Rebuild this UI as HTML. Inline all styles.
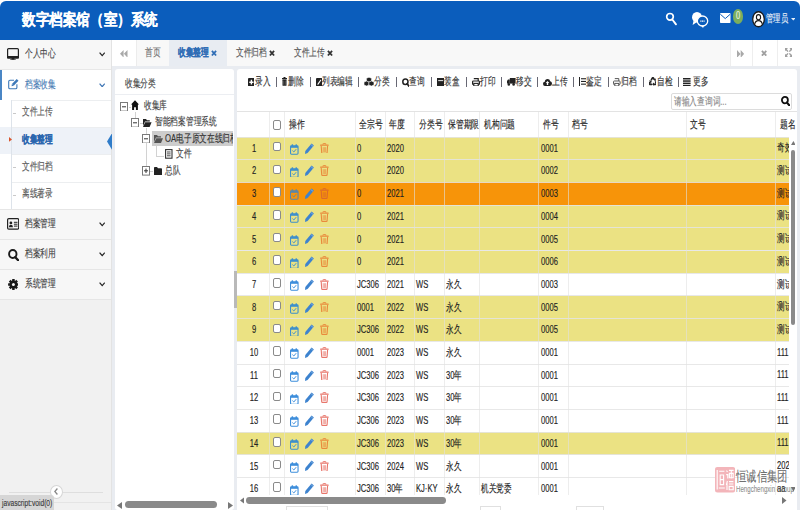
<!DOCTYPE html>
<html><head><meta charset="utf-8"><style>
html,body{margin:0;padding:0;}
body{width:800px;height:510px;overflow:hidden;position:relative;background:#fff;font-family:"Liberation Sans",sans-serif;}
.r{position:absolute;box-sizing:border-box;}
.t{position:absolute;white-space:nowrap;transform-origin:0 50%;-webkit-text-stroke:0.15px currentColor;}
</style></head><body>
<div class="r" style="left:0px;top:0px;width:800px;height:40px;background:#ffffff;"></div>
<div class="r" style="left:0px;top:1px;width:800px;height:39px;background:#0b5dbc;border-radius:6px 6px 0 0"></div>
<div class="t" style="left:22px;top:11.80px;font-size:16px;line-height:16px;color:#ffffff;font-weight:bold;transform:scaleX(0.85);">数字档案馆（室）系统</div>
<svg class="r" style="left:665px;top:12px;" width="13" height="14" viewBox="0 0 13 14" preserveAspectRatio="none"><circle cx="5" cy="4.8" r="3.3" fill="none" stroke="#fff" stroke-width="1.7"/><line x1="7.3" y1="7.5" x2="11" y2="12.3" stroke="#fff" stroke-width="1.9" stroke-linecap="round"/></svg>
<svg class="r" style="left:690px;top:10px;" width="20" height="19" viewBox="0 0 20 19" preserveAspectRatio="none"><ellipse cx="7" cy="7.2" rx="5" ry="5.3" fill="#fff"/><path d="M3.5 11 L2.6 15 L7 12 Z" fill="#fff"/><ellipse cx="12.5" cy="11" rx="5.2" ry="5" fill="#0b5dbc" stroke="#fff" stroke-width="1.3"/><path d="M11 15.5 L13 18 L14.2 15.5 Z" fill="#fff"/><line x1="10.3" y1="11.2" x2="14.7" y2="11.2" stroke="#fff" stroke-width="1.2" stroke-dasharray="1.1 0.5"/></svg>
<svg class="r" style="left:720px;top:13px;" width="10.5" height="10" viewBox="0 0 10.5 10" preserveAspectRatio="none"><rect x="0" y="0" width="10.5" height="10" rx="0.8" fill="#fff"/><path d="M0.3 1.2 L5.25 5.6 L10.2 1.2" fill="none" stroke="#0b5dbc" stroke-width="1"/></svg>
<div class="r" style="left:733px;top:9px;width:10px;height:14.5px;background:#7cae5c;border-radius:5px/7px"></div>
<div class="t" style="left:735.5px;top:10.50px;font-size:10px;line-height:10px;color:#e9f2e4;font-weight:normal;transform:scaleX(0.75);">0</div>
<svg class="r" style="left:751.5px;top:11px;" width="13" height="16.5" viewBox="0 0 13 16.5" preserveAspectRatio="none"><ellipse cx="6.5" cy="8.25" rx="5.8" ry="7.5" fill="#fff" stroke="#1a1a1a" stroke-width="1.3"/><ellipse cx="6.5" cy="6.2" rx="2.1" ry="2.6" fill="none" stroke="#1a1a1a" stroke-width="1.1"/><path d="M2.6 13.6 Q3.2 9.6 6.5 9.6 Q9.8 9.6 10.4 13.6" fill="none" stroke="#1a1a1a" stroke-width="1.1"/></svg>
<div class="t" style="left:766px;top:13.00px;font-size:11px;line-height:11px;color:#e6eef8;font-weight:normal;transform:scaleX(0.66);">管理员</div>
<svg class="r" style="left:790.8px;top:18.2px;" width="4.6" height="2.6" viewBox="0 0 4.6 2.6" preserveAspectRatio="none"><path d="M0 0 L4.6 0 L2.3 2.6 Z" fill="#e6eef8"/></svg>
<div class="r" style="left:0px;top:40px;width:111px;height:470px;background:#f1f1f1;"></div>
<div class="r" style="left:0px;top:40px;width:111px;height:29px;background:#f7f7f7;"></div>
<div class="r" style="left:0px;top:69px;width:111px;height:1px;background:#e8e8e8;"></div>
<div class="r" style="left:0px;top:70px;width:111px;height:139px;background:#ffffff;"></div>
<div class="r" style="left:0px;top:70px;width:2px;height:30px;background:#4a86c5;"></div>
<div class="r" style="left:0px;top:127.2px;width:111px;height:27.2px;background:#eef2f8;"></div>
<div class="r" style="left:11px;top:100px;width:100px;height:1px;background:#eceef0;"></div>
<div class="r" style="left:11px;top:127.2px;width:100px;height:1px;background:#eceef0;"></div>
<div class="r" style="left:11px;top:154.4px;width:100px;height:1px;background:#eceef0;"></div>
<div class="r" style="left:11px;top:181.6px;width:100px;height:1px;background:#eceef0;"></div>
<div class="r" style="left:11px;top:100px;width:1px;height:109px;background:#dde3ea;"></div>
<div class="r" style="left:0px;top:208.8px;width:111px;height:90px;background:#f7f7f7;"></div>
<div class="r" style="left:0px;top:208.8px;width:111px;height:1px;background:#e6e6e6;"></div>
<div class="r" style="left:0px;top:238.8px;width:111px;height:1px;background:#e6e6e6;"></div>
<div class="r" style="left:0px;top:268.8px;width:111px;height:1px;background:#e6e6e6;"></div>
<div class="r" style="left:0px;top:298.8px;width:111px;height:1px;background:#e6e6e6;"></div>
<div class="r" style="left:111px;top:40px;width:1px;height:470px;background:#e3e3e3;"></div>
<svg class="r" style="left:7px;top:47.7px;" width="12" height="12.8" viewBox="0 0 12 12.8" preserveAspectRatio="none"><rect x="0.6" y="0.6" width="10.8" height="9.4" rx="1" fill="none" stroke="#222" stroke-width="1.2"/><rect x="0" y="8" width="12" height="2.4" rx="0.6" fill="#222"/><rect x="4.6" y="10" width="2.8" height="1.6" fill="#222"/><rect x="3.2" y="11.4" width="5.6" height="1.4" fill="#222"/></svg>
<div class="t" style="left:25px;top:48.00px;font-size:11px;line-height:11px;color:#444;font-weight:normal;transform:scaleX(0.7);">个人中心</div>
<svg class="r" style="left:98.8px;top:52.400000000000006px;" width="6.4" height="4.6" viewBox="0 0 6.4 4.6" preserveAspectRatio="none"><path d="M0.6 0.7 L3.2 3.7 L5.8 0.7" fill="none" stroke="#222" stroke-width="1.2"/></svg>
<svg class="r" style="left:7.8px;top:78.2px;" width="11" height="11.4" viewBox="0 0 11 11.4" preserveAspectRatio="none"><path d="M6 2.2 H2 Q0.7 2.2 0.7 3.5 V9.4 Q0.7 10.7 2 10.7 H7.6 Q8.9 10.7 8.9 9.4 V6.2" fill="none" stroke="#3d78b8" stroke-width="1.1"/><path d="M3.6 8.2 L3.9 6 L8.7 1 L10.5 2.7 L5.7 7.8 Z" fill="#3d78b8"/><path d="M4.3 6.4 L5.4 7.5" stroke="#fff" stroke-width="0.5"/></svg>
<div class="t" style="left:25px;top:78.50px;font-size:11px;line-height:11px;color:#4a7db5;font-weight:normal;transform:scaleX(0.7);">档案收集</div>
<svg class="r" style="left:98.8px;top:82.7px;" width="6.4" height="4.6" viewBox="0 0 6.4 4.6" preserveAspectRatio="none"><path d="M0.6 0.7 L3.2 3.7 L5.8 0.7" fill="none" stroke="#3c74b4" stroke-width="1.2"/></svg>
<div class="t" style="left:22px;top:106.40px;font-size:11px;line-height:11px;color:#5a5a5a;font-weight:normal;transform:scaleX(0.7);">文件上传</div>
<div class="r" style="left:12.5px;top:113.0px;width:3.5px;height:1px;background:#c9c9c9;"></div>
<div class="t" style="left:22px;top:133.60px;font-size:11px;line-height:11px;color:#2a66ae;font-weight:bold;transform:scaleX(0.7);">收集整理</div>
<svg class="r" style="left:9.4px;top:137.2px;" width="3" height="4.8" viewBox="0 0 3 4.8" preserveAspectRatio="none"><path d="M0 0 L3 2.4 L0 4.8 Z" fill="#d9542b"/></svg>
<div class="t" style="left:22px;top:160.80px;font-size:11px;line-height:11px;color:#5a5a5a;font-weight:normal;transform:scaleX(0.7);">文件归档</div>
<div class="r" style="left:12.5px;top:167.4px;width:3.5px;height:1px;background:#c9c9c9;"></div>
<div class="t" style="left:22px;top:188.00px;font-size:11px;line-height:11px;color:#5a5a5a;font-weight:normal;transform:scaleX(0.7);">离线著录</div>
<div class="r" style="left:12.5px;top:194.6px;width:3.5px;height:1px;background:#c9c9c9;"></div>
<svg class="r" style="left:106.8px;top:133px;" width="5.2" height="17" viewBox="0 0 5.2 17" preserveAspectRatio="none"><path d="M5.2 0 L0 8.5 L5.2 17 Z" fill="#2f7cc9"/></svg>
<svg class="r" style="left:6.9px;top:218.3px;" width="12.3" height="11.7" viewBox="0 0 12.3 11.7" preserveAspectRatio="none"><rect x="0.6" y="0.6" width="11.1" height="10.5" rx="1.2" fill="none" stroke="#222" stroke-width="1.2"/><circle cx="3.9" cy="4.9" r="1.4" fill="#222"/><path d="M1.8 9.2 Q2 6.7 3.9 6.7 Q5.8 6.7 6 9.2 Z" fill="#222"/><rect x="6.9" y="3.8" width="3.6" height="1" fill="#222"/><rect x="6.9" y="5.7" width="3.6" height="1" fill="#222"/><rect x="6.9" y="7.6" width="3.6" height="1" fill="#222"/></svg>
<div class="t" style="left:25px;top:217.80px;font-size:11px;line-height:11px;color:#444;font-weight:normal;transform:scaleX(0.7);">档案管理</div>
<svg class="r" style="left:98.8px;top:222.2px;" width="6.4" height="4.6" viewBox="0 0 6.4 4.6" preserveAspectRatio="none"><path d="M0.6 0.7 L3.2 3.7 L5.8 0.7" fill="none" stroke="#222" stroke-width="1.2"/></svg>
<svg class="r" style="left:7.6px;top:248.8px;" width="11.4" height="12.4" viewBox="0 0 11.4 12.4" preserveAspectRatio="none"><ellipse cx="4.8" cy="5" rx="3.7" ry="4" fill="none" stroke="#1a1a1a" stroke-width="1.9"/><line x1="7.3" y1="8.2" x2="10.3" y2="11.4" stroke="#1a1a1a" stroke-width="2.3" stroke-linecap="round"/></svg>
<div class="t" style="left:25px;top:247.80px;font-size:11px;line-height:11px;color:#444;font-weight:normal;transform:scaleX(0.7);">档案利用</div>
<svg class="r" style="left:98.8px;top:252.2px;" width="6.4" height="4.6" viewBox="0 0 6.4 4.6" preserveAspectRatio="none"><path d="M0.6 0.7 L3.2 3.7 L5.8 0.7" fill="none" stroke="#222" stroke-width="1.2"/></svg>
<svg class="r" style="left:7.6px;top:279.4px;" width="10.8" height="11" viewBox="0 0 10.8 11" preserveAspectRatio="none"><g transform="translate(5.4 5.5) scale(0.98 1)"><circle r="3.9" fill="#1a1a1a"/><rect x="-1.3" y="-5.4" width="2.6" height="2.6" rx="0.3" fill="#1a1a1a" transform="rotate(0)"/><rect x="-1.3" y="-5.4" width="2.6" height="2.6" rx="0.3" fill="#1a1a1a" transform="rotate(45)"/><rect x="-1.3" y="-5.4" width="2.6" height="2.6" rx="0.3" fill="#1a1a1a" transform="rotate(90)"/><rect x="-1.3" y="-5.4" width="2.6" height="2.6" rx="0.3" fill="#1a1a1a" transform="rotate(135)"/><rect x="-1.3" y="-5.4" width="2.6" height="2.6" rx="0.3" fill="#1a1a1a" transform="rotate(180)"/><rect x="-1.3" y="-5.4" width="2.6" height="2.6" rx="0.3" fill="#1a1a1a" transform="rotate(225)"/><rect x="-1.3" y="-5.4" width="2.6" height="2.6" rx="0.3" fill="#1a1a1a" transform="rotate(270)"/><rect x="-1.3" y="-5.4" width="2.6" height="2.6" rx="0.3" fill="#1a1a1a" transform="rotate(315)"/><circle r="1.5" fill="#f7f7f7"/></g></svg>
<div class="t" style="left:25px;top:277.80px;font-size:11px;line-height:11px;color:#444;font-weight:normal;transform:scaleX(0.7);">系统管理</div>
<svg class="r" style="left:98.8px;top:282.2px;" width="6.4" height="4.6" viewBox="0 0 6.4 4.6" preserveAspectRatio="none"><path d="M0.6 0.7 L3.2 3.7 L5.8 0.7" fill="none" stroke="#222" stroke-width="1.2"/></svg>
<div class="r" style="left:9px;top:491.5px;width:94px;height:1px;background:#dedede;"></div>
<div class="r" style="left:49.5px;top:485px;width:13px;height:14px;border-radius:50%;background:#fff;border:1px solid #d6d6d6"></div>
<svg class="r" style="left:53.5px;top:488px;" width="4" height="7" viewBox="0 0 4 7" preserveAspectRatio="none"><path d="M3.4 0.5 L0.8 3.5 L3.4 6.5" fill="none" stroke="#888" stroke-width="1.3"/></svg>
<div class="r" style="left:0px;top:501.5px;width:111px;height:1px;background:#e4e4e4;"></div>
<div class="r" style="left:0px;top:495px;width:53.6px;height:15px;background:#d6d6d6;border-radius:0 3px 0 0"></div>
<div class="t" style="left:2.2px;top:497.75px;font-size:9.5px;line-height:9.5px;color:#3a3a3a;font-weight:normal;transform:scaleX(0.7);">javascript:void(0)</div>
<div class="r" style="left:112px;top:40px;width:688px;height:25.5px;background:#f8f8f8;"></div>
<div class="r" style="left:112px;top:40px;width:23.5px;height:25.5px;background:#ffffff;"></div>
<div class="r" style="left:135.5px;top:40px;width:1px;height:25.5px;background:#ececec;"></div>
<svg class="r" style="left:120px;top:49.8px;" width="7.5" height="7.6" viewBox="0 0 7.5 7.6" preserveAspectRatio="none"><path d="M3.6 0 L0 3.8 L3.6 7.6 Z M7.5 0 L3.9 3.8 L7.5 7.6 Z" fill="#a9a9a9"/></svg>
<div class="t" style="left:145px;top:47.20px;font-size:11px;line-height:11px;color:#707070;font-weight:normal;transform:scaleX(0.7);">首页</div>
<div class="r" style="left:169.2px;top:40px;width:58.3px;height:25.5px;background:#e8ecf2;"></div>
<div class="t" style="left:178px;top:47.20px;font-size:11px;line-height:11px;color:#2f6db5;font-weight:bold;transform:scaleX(0.7);">收集整理</div>
<svg class="r" style="left:211px;top:50.4px;" width="6" height="6.4" viewBox="0 0 6 6.4" preserveAspectRatio="none"><path d="M0.9 0.9 L5.1 5.5 M5.1 0.9 L0.9 5.5" stroke="#2f6db5" stroke-width="1.8"/></svg>
<div class="t" style="left:236.3px;top:47.20px;font-size:11px;line-height:11px;color:#555;font-weight:normal;transform:scaleX(0.7);">文件归档</div>
<svg class="r" style="left:269.4px;top:50.4px;" width="6" height="6.4" viewBox="0 0 6 6.4" preserveAspectRatio="none"><path d="M0.9 0.9 L5.1 5.5 M5.1 0.9 L0.9 5.5" stroke="#333" stroke-width="1.8"/></svg>
<div class="t" style="left:294px;top:47.20px;font-size:11px;line-height:11px;color:#555;font-weight:normal;transform:scaleX(0.7);">文件上传</div>
<svg class="r" style="left:327.2px;top:50.4px;" width="6" height="6.4" viewBox="0 0 6 6.4" preserveAspectRatio="none"><path d="M0.9 0.9 L5.1 5.5 M5.1 0.9 L0.9 5.5" stroke="#333" stroke-width="1.8"/></svg>
<div class="r" style="left:729.8px;top:40px;width:70.2px;height:25.5px;background:#ffffff;"></div>
<div class="r" style="left:729.8px;top:40px;width:1px;height:25.5px;background:#eeeeee;"></div>
<div class="r" style="left:752px;top:40px;width:1px;height:25.5px;background:#eeeeee;"></div>
<div class="r" style="left:776.5px;top:40px;width:1px;height:25.5px;background:#eeeeee;"></div>
<svg class="r" style="left:737.2px;top:49.6px;" width="7.2" height="7.8" viewBox="0 0 7.2 7.8" preserveAspectRatio="none"><path d="M0 0 L3.5 3.9 L0 7.8 Z M3.7 0 L7.2 3.9 L3.7 7.8 Z" fill="#a9a9a9"/></svg>
<svg class="r" style="left:761.4px;top:49.7px;" width="6.2" height="6.6" viewBox="0 0 6.2 6.6" preserveAspectRatio="none"><path d="M0.9 0.9 L5.3 5.699999999999999 M5.3 0.9 L0.9 5.699999999999999" stroke="#a0a0a0" stroke-width="1.8"/></svg>
<svg class="r" style="left:785px;top:48.2px;" width="7.4" height="9" viewBox="0 0 7.4 9" preserveAspectRatio="none"><path d="M1 1.2 L3 3.6 M6.4 1.2 L4.4 3.6 M1 7.8 L3 5.4 M6.4 7.8 L4.4 5.4" stroke="#a0a0a0" stroke-width="1.4"/><path d="M0 0 H3 L0 3.3 Z M7.4 0 H4.4 L7.4 3.3 Z M0 9 H3 L0 5.7 Z M7.4 9 H4.4 L7.4 5.7 Z" fill="#a0a0a0"/></svg>
<div class="r" style="left:112px;top:65.5px;width:688px;height:444.5px;background:#e9ecf1;"></div>
<div class="r" style="left:115px;top:68.7px;width:118.5px;height:441.3px;background:#ffffff;border-radius:3px"></div>
<div class="r" style="left:115px;top:93.5px;width:118.5px;height:1.2px;background:#eceef2;"></div>
<div class="t" style="left:125px;top:78.00px;font-size:11px;line-height:11px;color:#444;font-weight:normal;transform:scaleX(0.7);">收集分类</div>
<div class="r" style="left:135px;top:111.5px;width:1px;height:6.0px;background:#d2d2d2;"></div>
<div class="r" style="left:145.8px;top:127.5px;width:1px;height:43.5px;background:#d2d2d2;"></div>
<div class="r" style="left:156px;top:143px;width:1px;height:13px;background:#d2d2d2;"></div>
<div class="r" style="left:156px;top:155.5px;width:8px;height:1px;background:#d2d2d2;"></div>
<div class="r" style="left:128.5px;top:106.5px;width:2.5px;height:1px;background:#d2d2d2;"></div>
<div class="r" style="left:139.5px;top:122.5px;width:3.5px;height:1px;background:#d2d2d2;"></div>
<div class="r" style="left:150px;top:170.5px;width:3px;height:1px;background:#d2d2d2;"></div>
<svg class="r" style="left:120.2px;top:101.6px;" width="8" height="9.6" viewBox="0 0 8 9.6" preserveAspectRatio="none"><rect x="0.5" y="0.5" width="7" height="8.6" fill="#fff" stroke="#7a7a7a" stroke-width="1"/><line x1="2" y1="4.8" x2="6" y2="4.8" stroke="#333" stroke-width="1"/></svg>
<svg class="r" style="left:131.3px;top:100.2px;" width="8" height="10.3" viewBox="0 0 8 10.3" preserveAspectRatio="none"><path d="M4 0.3 L8 4.6 L6.9 4.6 L6.9 10.3 L4.9 10.3 L4.9 7.2 L3.1 7.2 L3.1 10.3 L1.1 10.3 L1.1 4.6 L0 4.6 Z" fill="#111"/></svg>
<div class="t" style="left:144.2px;top:99.60px;font-size:11px;line-height:11px;color:#444;font-weight:normal;transform:scaleX(0.7);">收集库</div>
<svg class="r" style="left:131.4px;top:117.8px;" width="8" height="9.6" viewBox="0 0 8 9.6" preserveAspectRatio="none"><rect x="0.5" y="0.5" width="7" height="8.6" fill="#fff" stroke="#7a7a7a" stroke-width="1"/><line x1="2" y1="4.8" x2="6" y2="4.8" stroke="#333" stroke-width="1"/></svg>
<svg class="r" style="left:143.3px;top:118px;" width="8.6" height="9" viewBox="0 0 8.6 9" preserveAspectRatio="none"><path d="M0 1 H3 L4 2.2 H6.8 V3.6 H2 L0 8 Z" fill="#222"/><path d="M2.2 4.2 H8.6 L6.6 9 H0 Z" fill="#222"/></svg>
<div class="t" style="left:155.2px;top:116.20px;font-size:11px;line-height:11px;color:#444;font-weight:normal;transform:scaleX(0.7);">智能档案管理系统</div>
<div class="r" style="left:151.7px;top:131px;width:81.8px;height:15px;background:#cdcdcd;"></div>
<svg class="r" style="left:142px;top:133.8px;" width="8" height="9.6" viewBox="0 0 8 9.6" preserveAspectRatio="none"><rect x="0.5" y="0.5" width="7" height="8.6" fill="#fff" stroke="#7a7a7a" stroke-width="1"/><line x1="2" y1="4.8" x2="6" y2="4.8" stroke="#333" stroke-width="1"/></svg>
<svg class="r" style="left:154.3px;top:134.3px;" width="9" height="9" viewBox="0 0 9 9" preserveAspectRatio="none"><path d="M0 1 H3 L4 2.2 H7 V3.6 H2 L0 8 Z" fill="#555"/><path d="M2.3 4.2 H9 L7 9 H0 Z" fill="#555"/></svg>
<div class="r" style="left:151.7px;top:131px;width:81.8px;height:15px;overflow:hidden">
<div class="t" style="left:13.5px;top:1.5px;font-size:11px;line-height:11px;color:#333;transform:scaleX(0.70)">OA电子原文在线归档</div>
</div>
<svg class="r" style="left:165.2px;top:149px;" width="7.6" height="9.8" viewBox="0 0 7.6 9.8" preserveAspectRatio="none"><rect x="0.6" y="0.6" width="6.4" height="8.6" fill="none" stroke="#333" stroke-width="1.1"/><line x1="2" y1="3" x2="5.6" y2="3" stroke="#333" stroke-width="0.9"/><line x1="2" y1="4.9" x2="5.6" y2="4.9" stroke="#333" stroke-width="0.9"/><line x1="2" y1="6.8" x2="5.6" y2="6.8" stroke="#333" stroke-width="0.9"/></svg>
<div class="t" style="left:176.2px;top:148.00px;font-size:11px;line-height:11px;color:#444;font-weight:normal;transform:scaleX(0.7);">文件</div>
<svg class="r" style="left:141.8px;top:166.2px;" width="8" height="9.6" viewBox="0 0 8 9.6" preserveAspectRatio="none"><rect x="0.5" y="0.5" width="7" height="8.6" fill="#fff" stroke="#7a7a7a" stroke-width="1"/><line x1="2" y1="4.8" x2="6" y2="4.8" stroke="#333" stroke-width="1"/><line x1="4" y1="2.6" x2="4" y2="7" stroke="#333" stroke-width="1"/></svg>
<svg class="r" style="left:154.3px;top:166.8px;" width="8" height="8.4" viewBox="0 0 8 8.4" preserveAspectRatio="none"><path d="M0 0.8 Q0 0 0.8 0 H3 L4 1.3 H7.2 Q8 1.3 8 2.1 V7.6 Q8 8.4 7.2 8.4 H0.8 Q0 8.4 0 7.6 Z" fill="#222"/></svg>
<div class="t" style="left:165.2px;top:164.50px;font-size:11px;line-height:11px;color:#444;font-weight:normal;transform:scaleX(0.7);">总队</div>
<svg class="r" style="left:116.5px;top:501.5px;" width="5" height="7" viewBox="0 0 5 7" preserveAspectRatio="none"><path d="M5 0 L0 3.5 L5 7 Z" fill="#777"/></svg>
<div class="r" style="left:125px;top:501px;width:92px;height:7px;background:#8a8a8a;border-radius:3.5px"></div>
<svg class="r" style="left:228px;top:501.5px;" width="5" height="7" viewBox="0 0 5 7" preserveAspectRatio="none"><path d="M0 0 L5 3.5 L0 7 Z" fill="#777"/></svg>
<div class="r" style="left:233.5px;top:270.6px;width:3.5px;height:37.4px;background:#b9b9b9;"></div>
<div class="r" style="left:237px;top:69px;width:560px;height:441px;background:#ffffff;border-radius:3px"></div>
<svg class="r" style="left:247.6px;top:77.6px;" width="6.8" height="8.4" viewBox="0 0 6.8 8.4" preserveAspectRatio="none"><rect x="0" y="0" width="6.8" height="8.4" rx="1" fill="#222"/><path d="M3.4 1.8 V6.6 M1.3 4.2 H5.5" stroke="#fff" stroke-width="1.4"/></svg>
<div class="t" style="left:255px;top:75.80px;font-size:11px;line-height:11px;color:#333;font-weight:normal;transform:scaleX(0.7);">录入</div>
<div class="r" style="left:275.9px;top:77.4px;width:1.1px;height:9.4px;background:#686874;"></div>
<svg class="r" style="left:282px;top:77.4px;" width="5" height="8.8" viewBox="0 0 5 8.8" preserveAspectRatio="none"><rect x="1.5" y="0" width="2" height="1.2" fill="#222"/><rect x="0" y="1" width="5" height="1.3" fill="#222"/><rect x="0.5" y="2.6" width="4" height="6.2" rx="0.6" fill="#222"/><path d="M1.7 3.6 V7.8 M3.3 3.6 V7.8" stroke="#888" stroke-width="0.5"/></svg>
<div class="t" style="left:287.6px;top:75.80px;font-size:11px;line-height:11px;color:#333;font-weight:normal;transform:scaleX(0.7);">删除</div>
<div class="r" style="left:309.9px;top:77.4px;width:1.1px;height:9.4px;background:#686874;"></div>
<svg class="r" style="left:316px;top:77.6px;" width="6.4" height="8.4" viewBox="0 0 6.4 8.4" preserveAspectRatio="none"><rect x="0" y="0" width="6.4" height="8.4" rx="1" fill="#222"/><path d="M1.4 7 L1.7 5.6 L4.6 1.6 L5.3 2.3 L2.5 6.4 Z" fill="#fff"/></svg>
<div class="t" style="left:322.3px;top:75.80px;font-size:11px;line-height:11px;color:#333;font-weight:normal;transform:scaleX(0.7);">列表编辑</div>
<div class="r" style="left:357.9px;top:77.4px;width:1.1px;height:9.4px;background:#686874;"></div>
<svg class="r" style="left:364px;top:77.2px;" width="10" height="9.4" viewBox="0 0 10 9.4" preserveAspectRatio="none"><g fill="#222" stroke="#fff" stroke-width="0.6"><path d="M5 0.2 L7.6 1.3 V4.2 L5 5.3 L2.4 4.2 V1.3 Z"/><path d="M2.6 4 L5.2 5.1 V8 L2.6 9.1 L0 8 V5.1 Z"/><path d="M7.4 4 L10 5.1 V8 L7.4 9.1 L4.8 8 V5.1 Z"/></g></svg>
<div class="t" style="left:374.2px;top:75.80px;font-size:11px;line-height:11px;color:#333;font-weight:normal;transform:scaleX(0.7);">分类</div>
<div class="r" style="left:395.7px;top:77.4px;width:1.1px;height:9.4px;background:#686874;"></div>
<svg class="r" style="left:401.6px;top:77.6px;" width="7.8" height="9" viewBox="0 0 7.8 9" preserveAspectRatio="none"><ellipse cx="3.4" cy="3.7" rx="2.6" ry="2.8" fill="none" stroke="#222" stroke-width="1.5"/><line x1="5.2" y1="5.8" x2="7.2" y2="8.4" stroke="#222" stroke-width="1.8" stroke-linecap="round"/></svg>
<div class="t" style="left:409px;top:75.80px;font-size:11px;line-height:11px;color:#333;font-weight:normal;transform:scaleX(0.7);">查询</div>
<div class="r" style="left:431.1px;top:77.4px;width:1.1px;height:9.4px;background:#686874;"></div>
<svg class="r" style="left:437px;top:77.6px;" width="7.4" height="8.4" viewBox="0 0 7.4 8.4" preserveAspectRatio="none"><rect x="0" y="0" width="7.4" height="8.4" fill="#222"/><rect x="1.2" y="2.2" width="5" height="0.9" fill="#fff"/></svg>
<div class="t" style="left:444.4px;top:75.80px;font-size:11px;line-height:11px;color:#333;font-weight:normal;transform:scaleX(0.7);">装盒</div>
<div class="r" style="left:465.9px;top:77.4px;width:1.1px;height:9.4px;background:#686874;"></div>
<svg class="r" style="left:472px;top:77.6px;" width="8" height="8.6" viewBox="0 0 8 8.6" preserveAspectRatio="none"><path d="M1.8 0.6 H6.2 V3" fill="none" stroke="#222" stroke-width="1.2"/><rect x="0.6" y="3" width="6.8" height="3.6" rx="0.8" fill="none" stroke="#222" stroke-width="1.2"/><rect x="1.8" y="5.4" width="4.4" height="2.6" fill="#fff" stroke="#222" stroke-width="1.1"/></svg>
<div class="t" style="left:480px;top:75.80px;font-size:11px;line-height:11px;color:#333;font-weight:normal;transform:scaleX(0.7);">打印</div>
<div class="r" style="left:500.9px;top:77.4px;width:1.1px;height:9.4px;background:#686874;"></div>
<svg class="r" style="left:507px;top:78.2px;" width="8.6" height="7.8" viewBox="0 0 8.6 7.8" preserveAspectRatio="none"><rect x="2.8" y="0" width="5.8" height="5.6" fill="#222"/><path d="M0 3 L1 1.6 H2.8 V5.6 H0 Z" fill="#222"/><circle cx="1.8" cy="6.4" r="1.3" fill="#222"/><circle cx="6.6" cy="6.4" r="1.3" fill="#222"/></svg>
<div class="t" style="left:515.6px;top:75.80px;font-size:11px;line-height:11px;color:#333;font-weight:normal;transform:scaleX(0.7);">移交</div>
<div class="r" style="left:536.7px;top:77.4px;width:1.1px;height:9.4px;background:#686874;"></div>
<svg class="r" style="left:543px;top:77.6px;" width="9" height="8" viewBox="0 0 9 8" preserveAspectRatio="none"><path d="M2 8 Q0 8 0 5.8 Q0 4 1.8 3.8 Q2 1 4.6 1 Q6.8 1 7.2 3.2 Q9 3.4 9 5.6 Q9 8 7 8 Z" fill="#222"/><path d="M4.5 3 L6.3 5 H5.2 V7 H3.8 V5 H2.7 Z" fill="#fff"/></svg>
<div class="t" style="left:552px;top:75.80px;font-size:11px;line-height:11px;color:#333;font-weight:normal;transform:scaleX(0.7);">上传</div>
<div class="r" style="left:572.5px;top:77.4px;width:1.1px;height:9.4px;background:#686874;"></div>
<svg class="r" style="left:578.6px;top:77.4px;" width="7.4" height="9" viewBox="0 0 7.4 9" preserveAspectRatio="none"><rect x="0" y="0" width="1" height="9" fill="#222"/><rect x="2" y="1.2" width="5.4" height="1.1" fill="#222"/><rect x="2" y="3.9" width="5.4" height="1.1" fill="#222"/><rect x="2" y="6.6" width="5.4" height="1.1" fill="#222"/></svg>
<div class="t" style="left:586px;top:75.80px;font-size:11px;line-height:11px;color:#333;font-weight:normal;transform:scaleX(0.7);">鉴定</div>
<div class="r" style="left:608.1px;top:77.4px;width:1.1px;height:9.4px;background:#686874;"></div>
<svg class="r" style="left:613.4px;top:77.6px;" width="7.6" height="8.6" viewBox="0 0 7.6 8.6" preserveAspectRatio="none"><path d="M1.8 0.6 H5.8 V3" fill="none" stroke="#555" stroke-width="1"/><rect x="0.5" y="3" width="6.6" height="3.6" rx="0.8" fill="none" stroke="#555" stroke-width="1"/><rect x="1.8" y="5.4" width="4" height="2.6" fill="#fff" stroke="#555" stroke-width="1"/></svg>
<div class="t" style="left:621px;top:75.80px;font-size:11px;line-height:11px;color:#333;font-weight:normal;transform:scaleX(0.7);">归档</div>
<div class="r" style="left:642.5px;top:77.4px;width:1.1px;height:9.4px;background:#686874;"></div>
<svg class="r" style="left:648.6px;top:77.4px;" width="7.8" height="8.8" viewBox="0 0 7.8 8.8" preserveAspectRatio="none"><g fill="none" stroke="#222" stroke-width="1.7" stroke-linecap="butt"><path d="M2.2 3.2 L3.3 1.2 Q3.9 0.3 4.5 1.2 L5.3 2.6"/><path d="M6.4 4.4 L7.2 6 Q7.7 7.3 6.4 7.3 H4.8"/><path d="M3 7.3 H1.4 Q0.1 7.3 0.6 6 L1.2 4.8"/></g><path d="M4.4 2.4 L6.9 1.6 L6.6 4.4 Z M5 5.6 L3 7.3 L5 8.8 Z M0 3.6 L2.9 3.4 L2.1 6 Z" fill="#222"/></svg>
<div class="t" style="left:656.6px;top:75.80px;font-size:11px;line-height:11px;color:#333;font-weight:normal;transform:scaleX(0.7);">自检</div>
<div class="r" style="left:678.1px;top:77.4px;width:1.1px;height:9.4px;background:#686874;"></div>
<svg class="r" style="left:683px;top:77.8px;" width="7.6" height="8.4" viewBox="0 0 7.6 8.4" preserveAspectRatio="none"><rect x="0" y="0" width="7.6" height="1.5" fill="#222"/><rect x="0" y="2.3" width="7.6" height="1.5" fill="#222"/><rect x="0" y="4.6" width="7.6" height="1.5" fill="#222"/><rect x="0" y="6.9" width="7.6" height="1.5" fill="#222"/></svg>
<div class="t" style="left:693.4px;top:75.80px;font-size:11px;line-height:11px;color:#333;font-weight:normal;transform:scaleX(0.7);">更多</div>
<div class="r" style="left:670.5px;top:92.8px;width:121px;height:17.5px;background:#fff;border:1px solid #dcdcdc;border-radius:2px"></div>
<div class="t" style="left:673.7px;top:95.60px;font-size:11px;line-height:11px;color:#888;font-weight:normal;transform:scaleX(0.7);">请输入查询词...</div>
<svg class="r" style="left:780.5px;top:96.3px;" width="9.2" height="10.2" viewBox="0 0 9.2 10.2" preserveAspectRatio="none"><ellipse cx="3.9" cy="4.1" rx="3" ry="3.2" fill="none" stroke="#111" stroke-width="1.8"/><line x1="6" y1="6.6" x2="8.4" y2="9.4" stroke="#111" stroke-width="2.2" stroke-linecap="round"/></svg>
<div class="r" style="left:237px;top:111px;width:560px;height:384px;overflow:hidden">
<div class="r" style="left:0.00px;top:0.00px;width:560.00px;height:1.00px;background:#e3e3e3;"></div>
<div class="r" style="left:48.00px;top:0px;width:70.30px;height:26px;overflow:hidden">
<div class="t" style="left:3.60px;top:7.5px;font-size:11px;line-height:11px;color:#222;font-weight:500;transform:scaleX(0.71)">操作</div>
</div>
<div class="r" style="left:118.80px;top:0px;width:29.40px;height:26px;overflow:hidden">
<div class="t" style="left:3.60px;top:7.5px;font-size:11px;line-height:11px;color:#222;font-weight:500;transform:scaleX(0.71)">全宗号</div>
</div>
<div class="r" style="left:148.70px;top:0px;width:29.00px;height:26px;overflow:hidden">
<div class="t" style="left:3.60px;top:7.5px;font-size:11px;line-height:11px;color:#222;font-weight:500;transform:scaleX(0.71)">年度</div>
</div>
<div class="r" style="left:178.20px;top:0px;width:29.20px;height:26px;overflow:hidden">
<div class="t" style="left:3.60px;top:7.5px;font-size:11px;line-height:11px;color:#222;font-weight:500;transform:scaleX(0.71)">分类号</div>
</div>
<div class="r" style="left:207.90px;top:0px;width:34.60px;height:26px;overflow:hidden">
<div class="t" style="left:3.60px;top:7.5px;font-size:11px;line-height:11px;color:#222;font-weight:500;transform:scaleX(0.71)">保管期限</div>
</div>
<div class="r" style="left:243.00px;top:0px;width:58.75px;height:26px;overflow:hidden">
<div class="t" style="left:3.60px;top:7.5px;font-size:11px;line-height:11px;color:#222;font-weight:500;transform:scaleX(0.71)">机构问题</div>
</div>
<div class="r" style="left:302.25px;top:0px;width:28.75px;height:26px;overflow:hidden">
<div class="t" style="left:3.60px;top:7.5px;font-size:11px;line-height:11px;color:#222;font-weight:500;transform:scaleX(0.71)">件号</div>
</div>
<div class="r" style="left:331.50px;top:0px;width:117.75px;height:26px;overflow:hidden">
<div class="t" style="left:3.60px;top:7.5px;font-size:11px;line-height:11px;color:#222;font-weight:500;transform:scaleX(0.71)">档号</div>
</div>
<div class="r" style="left:449.75px;top:0px;width:88.75px;height:26px;overflow:hidden">
<div class="t" style="left:3.60px;top:7.5px;font-size:11px;line-height:11px;color:#222;font-weight:500;transform:scaleX(0.71)">文号</div>
</div>
<div class="r" style="left:539.00px;top:0px;width:21.00px;height:26px;overflow:hidden">
<div class="t" style="left:3.60px;top:7.5px;font-size:11px;line-height:11px;color:#222;font-weight:500;transform:scaleX(0.71)">题名</div>
</div>
<div class="r" style="left:36.10px;top:9.30px;width:7.80px;height:9.60px;background:#fff;border:1px solid #8a8a8a;border-radius:2px"></div>
<div class="r" style="left:0.00px;top:26.00px;width:552.00px;height:22.70px;background:#ebe283;"></div>
<div class="t" style="left:16.50px;top:31.75px;font-size:11px;line-height:11px;color:#222;font-weight:normal;transform:scaleX(0.69);transform-origin:50% 50%;width:0;display:flex;justify-content:center">1</div>
<div class="r" style="left:36.40px;top:30.90px;width:7.80px;height:9.60px;background:#fff;border:1px solid #8a8a8a;border-radius:2px"></div>
<svg class="r" style="left:53.40px;top:33.00px" width="8.6" height="10.8" viewBox="0 0 8.6 10.8" preserveAspectRatio="none"><rect x="0.55" y="1.9" width="7.5" height="8.35" rx="0.9" fill="none" stroke="#3d8fcc" stroke-width="1.1"/><rect x="0.55" y="1.9" width="7.5" height="1.9" fill="#3d8fcc"/><rect x="1.6" y="0.2" width="1.5" height="2.8" rx="0.5" fill="#3d8fcc"/><rect x="5.5" y="0.2" width="1.5" height="2.8" rx="0.5" fill="#3d8fcc"/><path d="M2.4 6.6 L3.8 8 L6.2 5.2" fill="none" stroke="#3d8fcc" stroke-width="1"/></svg>
<svg class="r" style="left:67.80px;top:31.60px" width="9" height="11" viewBox="0 0 9 11" preserveAspectRatio="none"><path d="M0 11 L0.3 8.1 L6.6 0.5 L8.9 2.4 L2.6 10 Z" fill="#3d83cf"/><path d="M5.8 1.5 L8.1 3.4" stroke="#a9c9ea" stroke-width="0.6"/></svg>
<svg class="r" style="left:83.00px;top:31.70px" width="8.8" height="10.8" viewBox="0 0 8.8 10.8" preserveAspectRatio="none"><path d="M3 1.6 V0.9 Q3 0.4 3.5 0.4 H5.3 Q5.8 0.4 5.8 0.9 V1.6" fill="none" stroke="#e98a3c" stroke-width="1"/><rect x="0.1" y="1.5" width="8.6" height="1.3" rx="0.4" fill="#e98a3c"/><path d="M1.2 2.8 L1.7 9.8 Q1.8 10.4 2.4 10.4 H6.4 Q7 10.4 7.1 9.8 L7.6 2.8" fill="none" stroke="#e98a3c" stroke-width="1.1"/><path d="M3.2 4.2 V9 M4.4 4.2 V9 M5.6 4.2 V9" stroke="#e98a3c" stroke-width="0.65"/></svg>
<div class="t" style="left:120.00px;top:31.75px;font-size:11px;line-height:11px;color:#222;font-weight:normal;transform:scaleX(0.69);">0</div>
<div class="t" style="left:149.90px;top:31.75px;font-size:11px;line-height:11px;color:#222;font-weight:normal;transform:scaleX(0.69);">2020</div>
<div class="t" style="left:303.50px;top:31.75px;font-size:11px;line-height:11px;color:#222;font-weight:normal;transform:scaleX(0.69);">0001</div>
<div class="r" style="left:539.00px;top:26.00px;width:13.00px;height:22.7px;overflow:hidden">
<div class="t" style="left:1.4px;top:5.35px;font-size:11px;line-height:11px;color:#222;transform:scaleX(0.69)">奇效</div>
</div>
<div class="r" style="left:0.00px;top:48.70px;width:552.00px;height:22.70px;background:#ebe283;"></div>
<div class="t" style="left:16.50px;top:54.45px;font-size:11px;line-height:11px;color:#222;font-weight:normal;transform:scaleX(0.69);transform-origin:50% 50%;width:0;display:flex;justify-content:center">2</div>
<div class="r" style="left:36.40px;top:53.60px;width:7.80px;height:9.60px;background:#fff;border:1px solid #8a8a8a;border-radius:2px"></div>
<svg class="r" style="left:53.40px;top:55.70px" width="8.6" height="10.8" viewBox="0 0 8.6 10.8" preserveAspectRatio="none"><rect x="0.55" y="1.9" width="7.5" height="8.35" rx="0.9" fill="none" stroke="#3d8fcc" stroke-width="1.1"/><rect x="0.55" y="1.9" width="7.5" height="1.9" fill="#3d8fcc"/><rect x="1.6" y="0.2" width="1.5" height="2.8" rx="0.5" fill="#3d8fcc"/><rect x="5.5" y="0.2" width="1.5" height="2.8" rx="0.5" fill="#3d8fcc"/><path d="M2.4 6.6 L3.8 8 L6.2 5.2" fill="none" stroke="#3d8fcc" stroke-width="1"/></svg>
<svg class="r" style="left:67.80px;top:54.30px" width="9" height="11" viewBox="0 0 9 11" preserveAspectRatio="none"><path d="M0 11 L0.3 8.1 L6.6 0.5 L8.9 2.4 L2.6 10 Z" fill="#3d83cf"/><path d="M5.8 1.5 L8.1 3.4" stroke="#a9c9ea" stroke-width="0.6"/></svg>
<svg class="r" style="left:83.00px;top:54.40px" width="8.8" height="10.8" viewBox="0 0 8.8 10.8" preserveAspectRatio="none"><path d="M3 1.6 V0.9 Q3 0.4 3.5 0.4 H5.3 Q5.8 0.4 5.8 0.9 V1.6" fill="none" stroke="#e98a3c" stroke-width="1"/><rect x="0.1" y="1.5" width="8.6" height="1.3" rx="0.4" fill="#e98a3c"/><path d="M1.2 2.8 L1.7 9.8 Q1.8 10.4 2.4 10.4 H6.4 Q7 10.4 7.1 9.8 L7.6 2.8" fill="none" stroke="#e98a3c" stroke-width="1.1"/><path d="M3.2 4.2 V9 M4.4 4.2 V9 M5.6 4.2 V9" stroke="#e98a3c" stroke-width="0.65"/></svg>
<div class="t" style="left:120.00px;top:54.45px;font-size:11px;line-height:11px;color:#222;font-weight:normal;transform:scaleX(0.69);">0</div>
<div class="t" style="left:149.90px;top:54.45px;font-size:11px;line-height:11px;color:#222;font-weight:normal;transform:scaleX(0.69);">2020</div>
<div class="t" style="left:303.50px;top:54.45px;font-size:11px;line-height:11px;color:#222;font-weight:normal;transform:scaleX(0.69);">0002</div>
<div class="r" style="left:539.00px;top:48.70px;width:13.00px;height:22.7px;overflow:hidden">
<div class="t" style="left:1.4px;top:5.35px;font-size:11px;line-height:11px;color:#222;transform:scaleX(0.69)">测试</div>
</div>
<div class="r" style="left:0.00px;top:71.40px;width:552.00px;height:22.70px;background:#f79409;"></div>
<div class="t" style="left:16.50px;top:77.15px;font-size:11px;line-height:11px;color:#222;font-weight:normal;transform:scaleX(0.69);transform-origin:50% 50%;width:0;display:flex;justify-content:center">3</div>
<div class="r" style="left:36.40px;top:76.30px;width:7.80px;height:9.60px;background:#fff;border:1px solid #8a8a8a;border-radius:2px"></div>
<svg class="r" style="left:53.40px;top:78.40px" width="8.6" height="10.8" viewBox="0 0 8.6 10.8" preserveAspectRatio="none"><rect x="0.55" y="1.9" width="7.5" height="8.35" rx="0.9" fill="none" stroke="#5a86a8" stroke-width="1.1"/><rect x="0.55" y="1.9" width="7.5" height="1.9" fill="#5a86a8"/><rect x="1.6" y="0.2" width="1.5" height="2.8" rx="0.5" fill="#5a86a8"/><rect x="5.5" y="0.2" width="1.5" height="2.8" rx="0.5" fill="#5a86a8"/><path d="M2.4 6.6 L3.8 8 L6.2 5.2" fill="none" stroke="#5a86a8" stroke-width="1"/></svg>
<svg class="r" style="left:67.80px;top:77.00px" width="9" height="11" viewBox="0 0 9 11" preserveAspectRatio="none"><path d="M0 11 L0.3 8.1 L6.6 0.5 L8.9 2.4 L2.6 10 Z" fill="#3d83cf"/><path d="M5.8 1.5 L8.1 3.4" stroke="#a9c9ea" stroke-width="0.6"/></svg>
<svg class="r" style="left:83.00px;top:77.10px" width="8.8" height="10.8" viewBox="0 0 8.8 10.8" preserveAspectRatio="none"><path d="M3 1.6 V0.9 Q3 0.4 3.5 0.4 H5.3 Q5.8 0.4 5.8 0.9 V1.6" fill="none" stroke="#dc6a2a" stroke-width="1"/><rect x="0.1" y="1.5" width="8.6" height="1.3" rx="0.4" fill="#dc6a2a"/><path d="M1.2 2.8 L1.7 9.8 Q1.8 10.4 2.4 10.4 H6.4 Q7 10.4 7.1 9.8 L7.6 2.8" fill="none" stroke="#dc6a2a" stroke-width="1.1"/><path d="M3.2 4.2 V9 M4.4 4.2 V9 M5.6 4.2 V9" stroke="#dc6a2a" stroke-width="0.65"/></svg>
<div class="t" style="left:120.00px;top:77.15px;font-size:11px;line-height:11px;color:#222;font-weight:normal;transform:scaleX(0.69);">0</div>
<div class="t" style="left:149.90px;top:77.15px;font-size:11px;line-height:11px;color:#222;font-weight:normal;transform:scaleX(0.69);">2021</div>
<div class="t" style="left:303.50px;top:77.15px;font-size:11px;line-height:11px;color:#222;font-weight:normal;transform:scaleX(0.69);">0003</div>
<div class="r" style="left:539.00px;top:71.40px;width:13.00px;height:22.7px;overflow:hidden">
<div class="t" style="left:1.4px;top:5.35px;font-size:11px;line-height:11px;color:#222;transform:scaleX(0.69)">测试</div>
</div>
<div class="r" style="left:0.00px;top:94.10px;width:552.00px;height:22.70px;background:#ebe283;"></div>
<div class="t" style="left:16.50px;top:99.85px;font-size:11px;line-height:11px;color:#222;font-weight:normal;transform:scaleX(0.69);transform-origin:50% 50%;width:0;display:flex;justify-content:center">4</div>
<div class="r" style="left:36.40px;top:99.00px;width:7.80px;height:9.60px;background:#fff;border:1px solid #8a8a8a;border-radius:2px"></div>
<svg class="r" style="left:53.40px;top:101.10px" width="8.6" height="10.8" viewBox="0 0 8.6 10.8" preserveAspectRatio="none"><rect x="0.55" y="1.9" width="7.5" height="8.35" rx="0.9" fill="none" stroke="#3d8fcc" stroke-width="1.1"/><rect x="0.55" y="1.9" width="7.5" height="1.9" fill="#3d8fcc"/><rect x="1.6" y="0.2" width="1.5" height="2.8" rx="0.5" fill="#3d8fcc"/><rect x="5.5" y="0.2" width="1.5" height="2.8" rx="0.5" fill="#3d8fcc"/><path d="M2.4 6.6 L3.8 8 L6.2 5.2" fill="none" stroke="#3d8fcc" stroke-width="1"/></svg>
<svg class="r" style="left:67.80px;top:99.70px" width="9" height="11" viewBox="0 0 9 11" preserveAspectRatio="none"><path d="M0 11 L0.3 8.1 L6.6 0.5 L8.9 2.4 L2.6 10 Z" fill="#3d83cf"/><path d="M5.8 1.5 L8.1 3.4" stroke="#a9c9ea" stroke-width="0.6"/></svg>
<svg class="r" style="left:83.00px;top:99.80px" width="8.8" height="10.8" viewBox="0 0 8.8 10.8" preserveAspectRatio="none"><path d="M3 1.6 V0.9 Q3 0.4 3.5 0.4 H5.3 Q5.8 0.4 5.8 0.9 V1.6" fill="none" stroke="#e98a3c" stroke-width="1"/><rect x="0.1" y="1.5" width="8.6" height="1.3" rx="0.4" fill="#e98a3c"/><path d="M1.2 2.8 L1.7 9.8 Q1.8 10.4 2.4 10.4 H6.4 Q7 10.4 7.1 9.8 L7.6 2.8" fill="none" stroke="#e98a3c" stroke-width="1.1"/><path d="M3.2 4.2 V9 M4.4 4.2 V9 M5.6 4.2 V9" stroke="#e98a3c" stroke-width="0.65"/></svg>
<div class="t" style="left:120.00px;top:99.85px;font-size:11px;line-height:11px;color:#222;font-weight:normal;transform:scaleX(0.69);">0</div>
<div class="t" style="left:149.90px;top:99.85px;font-size:11px;line-height:11px;color:#222;font-weight:normal;transform:scaleX(0.69);">2021</div>
<div class="t" style="left:303.50px;top:99.85px;font-size:11px;line-height:11px;color:#222;font-weight:normal;transform:scaleX(0.69);">0004</div>
<div class="r" style="left:539.00px;top:94.10px;width:13.00px;height:22.7px;overflow:hidden">
<div class="t" style="left:1.4px;top:5.35px;font-size:11px;line-height:11px;color:#222;transform:scaleX(0.69)">测试</div>
</div>
<div class="r" style="left:0.00px;top:116.80px;width:552.00px;height:22.70px;background:#ebe283;"></div>
<div class="t" style="left:16.50px;top:122.55px;font-size:11px;line-height:11px;color:#222;font-weight:normal;transform:scaleX(0.69);transform-origin:50% 50%;width:0;display:flex;justify-content:center">5</div>
<div class="r" style="left:36.40px;top:121.70px;width:7.80px;height:9.60px;background:#fff;border:1px solid #8a8a8a;border-radius:2px"></div>
<svg class="r" style="left:53.40px;top:123.80px" width="8.6" height="10.8" viewBox="0 0 8.6 10.8" preserveAspectRatio="none"><rect x="0.55" y="1.9" width="7.5" height="8.35" rx="0.9" fill="none" stroke="#3d8fcc" stroke-width="1.1"/><rect x="0.55" y="1.9" width="7.5" height="1.9" fill="#3d8fcc"/><rect x="1.6" y="0.2" width="1.5" height="2.8" rx="0.5" fill="#3d8fcc"/><rect x="5.5" y="0.2" width="1.5" height="2.8" rx="0.5" fill="#3d8fcc"/><path d="M2.4 6.6 L3.8 8 L6.2 5.2" fill="none" stroke="#3d8fcc" stroke-width="1"/></svg>
<svg class="r" style="left:67.80px;top:122.40px" width="9" height="11" viewBox="0 0 9 11" preserveAspectRatio="none"><path d="M0 11 L0.3 8.1 L6.6 0.5 L8.9 2.4 L2.6 10 Z" fill="#3d83cf"/><path d="M5.8 1.5 L8.1 3.4" stroke="#a9c9ea" stroke-width="0.6"/></svg>
<svg class="r" style="left:83.00px;top:122.50px" width="8.8" height="10.8" viewBox="0 0 8.8 10.8" preserveAspectRatio="none"><path d="M3 1.6 V0.9 Q3 0.4 3.5 0.4 H5.3 Q5.8 0.4 5.8 0.9 V1.6" fill="none" stroke="#e98a3c" stroke-width="1"/><rect x="0.1" y="1.5" width="8.6" height="1.3" rx="0.4" fill="#e98a3c"/><path d="M1.2 2.8 L1.7 9.8 Q1.8 10.4 2.4 10.4 H6.4 Q7 10.4 7.1 9.8 L7.6 2.8" fill="none" stroke="#e98a3c" stroke-width="1.1"/><path d="M3.2 4.2 V9 M4.4 4.2 V9 M5.6 4.2 V9" stroke="#e98a3c" stroke-width="0.65"/></svg>
<div class="t" style="left:120.00px;top:122.55px;font-size:11px;line-height:11px;color:#222;font-weight:normal;transform:scaleX(0.69);">0</div>
<div class="t" style="left:149.90px;top:122.55px;font-size:11px;line-height:11px;color:#222;font-weight:normal;transform:scaleX(0.69);">2021</div>
<div class="t" style="left:303.50px;top:122.55px;font-size:11px;line-height:11px;color:#222;font-weight:normal;transform:scaleX(0.69);">0005</div>
<div class="r" style="left:539.00px;top:116.80px;width:13.00px;height:22.7px;overflow:hidden">
<div class="t" style="left:1.4px;top:5.35px;font-size:11px;line-height:11px;color:#222;transform:scaleX(0.69)">测试</div>
</div>
<div class="r" style="left:0.00px;top:139.50px;width:552.00px;height:22.70px;background:#ebe283;"></div>
<div class="t" style="left:16.50px;top:145.25px;font-size:11px;line-height:11px;color:#222;font-weight:normal;transform:scaleX(0.69);transform-origin:50% 50%;width:0;display:flex;justify-content:center">6</div>
<div class="r" style="left:36.40px;top:144.40px;width:7.80px;height:9.60px;background:#fff;border:1px solid #8a8a8a;border-radius:2px"></div>
<svg class="r" style="left:53.40px;top:146.50px" width="8.6" height="10.8" viewBox="0 0 8.6 10.8" preserveAspectRatio="none"><rect x="0.55" y="1.9" width="7.5" height="8.35" rx="0.9" fill="none" stroke="#3d8fcc" stroke-width="1.1"/><rect x="0.55" y="1.9" width="7.5" height="1.9" fill="#3d8fcc"/><rect x="1.6" y="0.2" width="1.5" height="2.8" rx="0.5" fill="#3d8fcc"/><rect x="5.5" y="0.2" width="1.5" height="2.8" rx="0.5" fill="#3d8fcc"/><path d="M2.4 6.6 L3.8 8 L6.2 5.2" fill="none" stroke="#3d8fcc" stroke-width="1"/></svg>
<svg class="r" style="left:67.80px;top:145.10px" width="9" height="11" viewBox="0 0 9 11" preserveAspectRatio="none"><path d="M0 11 L0.3 8.1 L6.6 0.5 L8.9 2.4 L2.6 10 Z" fill="#3d83cf"/><path d="M5.8 1.5 L8.1 3.4" stroke="#a9c9ea" stroke-width="0.6"/></svg>
<svg class="r" style="left:83.00px;top:145.20px" width="8.8" height="10.8" viewBox="0 0 8.8 10.8" preserveAspectRatio="none"><path d="M3 1.6 V0.9 Q3 0.4 3.5 0.4 H5.3 Q5.8 0.4 5.8 0.9 V1.6" fill="none" stroke="#e98a3c" stroke-width="1"/><rect x="0.1" y="1.5" width="8.6" height="1.3" rx="0.4" fill="#e98a3c"/><path d="M1.2 2.8 L1.7 9.8 Q1.8 10.4 2.4 10.4 H6.4 Q7 10.4 7.1 9.8 L7.6 2.8" fill="none" stroke="#e98a3c" stroke-width="1.1"/><path d="M3.2 4.2 V9 M4.4 4.2 V9 M5.6 4.2 V9" stroke="#e98a3c" stroke-width="0.65"/></svg>
<div class="t" style="left:120.00px;top:145.25px;font-size:11px;line-height:11px;color:#222;font-weight:normal;transform:scaleX(0.69);">0</div>
<div class="t" style="left:149.90px;top:145.25px;font-size:11px;line-height:11px;color:#222;font-weight:normal;transform:scaleX(0.69);">2021</div>
<div class="t" style="left:303.50px;top:145.25px;font-size:11px;line-height:11px;color:#222;font-weight:normal;transform:scaleX(0.69);">0006</div>
<div class="r" style="left:539.00px;top:139.50px;width:13.00px;height:22.7px;overflow:hidden">
<div class="t" style="left:1.4px;top:5.35px;font-size:11px;line-height:11px;color:#222;transform:scaleX(0.69)">测试</div>
</div>
<div class="r" style="left:0.00px;top:162.20px;width:552.00px;height:22.70px;background:#ffffff;"></div>
<div class="t" style="left:16.50px;top:167.95px;font-size:11px;line-height:11px;color:#222;font-weight:normal;transform:scaleX(0.69);transform-origin:50% 50%;width:0;display:flex;justify-content:center">7</div>
<div class="r" style="left:36.40px;top:167.10px;width:7.80px;height:9.60px;background:#fff;border:1px solid #8a8a8a;border-radius:2px"></div>
<svg class="r" style="left:53.40px;top:169.20px" width="8.6" height="10.8" viewBox="0 0 8.6 10.8" preserveAspectRatio="none"><rect x="0.55" y="1.9" width="7.5" height="8.35" rx="0.9" fill="none" stroke="#3d8edb" stroke-width="1.1"/><rect x="0.55" y="1.9" width="7.5" height="1.9" fill="#3d8edb"/><rect x="1.6" y="0.2" width="1.5" height="2.8" rx="0.5" fill="#3d8edb"/><rect x="5.5" y="0.2" width="1.5" height="2.8" rx="0.5" fill="#3d8edb"/><path d="M2.4 6.6 L3.8 8 L6.2 5.2" fill="none" stroke="#3d8edb" stroke-width="1"/></svg>
<svg class="r" style="left:67.80px;top:167.80px" width="9" height="11" viewBox="0 0 9 11" preserveAspectRatio="none"><path d="M0 11 L0.3 8.1 L6.6 0.5 L8.9 2.4 L2.6 10 Z" fill="#3d83cf"/><path d="M5.8 1.5 L8.1 3.4" stroke="#a9c9ea" stroke-width="0.6"/></svg>
<svg class="r" style="left:83.00px;top:167.90px" width="8.8" height="10.8" viewBox="0 0 8.8 10.8" preserveAspectRatio="none"><path d="M3 1.6 V0.9 Q3 0.4 3.5 0.4 H5.3 Q5.8 0.4 5.8 0.9 V1.6" fill="none" stroke="#e8766b" stroke-width="1"/><rect x="0.1" y="1.5" width="8.6" height="1.3" rx="0.4" fill="#e8766b"/><path d="M1.2 2.8 L1.7 9.8 Q1.8 10.4 2.4 10.4 H6.4 Q7 10.4 7.1 9.8 L7.6 2.8" fill="none" stroke="#e8766b" stroke-width="1.1"/><path d="M3.2 4.2 V9 M4.4 4.2 V9 M5.6 4.2 V9" stroke="#e8766b" stroke-width="0.65"/></svg>
<div class="t" style="left:120.00px;top:167.95px;font-size:11px;line-height:11px;color:#222;font-weight:normal;transform:scaleX(0.69);">JC306</div>
<div class="t" style="left:149.90px;top:167.95px;font-size:11px;line-height:11px;color:#222;font-weight:normal;transform:scaleX(0.69);">2021</div>
<div class="t" style="left:179.30px;top:167.95px;font-size:11px;line-height:11px;color:#222;font-weight:normal;transform:scaleX(0.69);">WS</div>
<div class="t" style="left:209.00px;top:167.95px;font-size:11px;line-height:11px;color:#222;font-weight:normal;transform:scaleX(0.69);">永久</div>
<div class="t" style="left:303.50px;top:167.95px;font-size:11px;line-height:11px;color:#222;font-weight:normal;transform:scaleX(0.69);">0003</div>
<div class="r" style="left:539.00px;top:162.20px;width:13.00px;height:22.7px;overflow:hidden">
<div class="t" style="left:1.4px;top:5.35px;font-size:11px;line-height:11px;color:#222;transform:scaleX(0.69)">测试</div>
</div>
<div class="r" style="left:0.00px;top:184.90px;width:552.00px;height:22.70px;background:#ebe283;"></div>
<div class="t" style="left:16.50px;top:190.65px;font-size:11px;line-height:11px;color:#222;font-weight:normal;transform:scaleX(0.69);transform-origin:50% 50%;width:0;display:flex;justify-content:center">8</div>
<div class="r" style="left:36.40px;top:189.80px;width:7.80px;height:9.60px;background:#fff;border:1px solid #8a8a8a;border-radius:2px"></div>
<svg class="r" style="left:53.40px;top:191.90px" width="8.6" height="10.8" viewBox="0 0 8.6 10.8" preserveAspectRatio="none"><rect x="0.55" y="1.9" width="7.5" height="8.35" rx="0.9" fill="none" stroke="#3d8fcc" stroke-width="1.1"/><rect x="0.55" y="1.9" width="7.5" height="1.9" fill="#3d8fcc"/><rect x="1.6" y="0.2" width="1.5" height="2.8" rx="0.5" fill="#3d8fcc"/><rect x="5.5" y="0.2" width="1.5" height="2.8" rx="0.5" fill="#3d8fcc"/><path d="M2.4 6.6 L3.8 8 L6.2 5.2" fill="none" stroke="#3d8fcc" stroke-width="1"/></svg>
<svg class="r" style="left:67.80px;top:190.50px" width="9" height="11" viewBox="0 0 9 11" preserveAspectRatio="none"><path d="M0 11 L0.3 8.1 L6.6 0.5 L8.9 2.4 L2.6 10 Z" fill="#3d83cf"/><path d="M5.8 1.5 L8.1 3.4" stroke="#a9c9ea" stroke-width="0.6"/></svg>
<svg class="r" style="left:83.00px;top:190.60px" width="8.8" height="10.8" viewBox="0 0 8.8 10.8" preserveAspectRatio="none"><path d="M3 1.6 V0.9 Q3 0.4 3.5 0.4 H5.3 Q5.8 0.4 5.8 0.9 V1.6" fill="none" stroke="#e98a3c" stroke-width="1"/><rect x="0.1" y="1.5" width="8.6" height="1.3" rx="0.4" fill="#e98a3c"/><path d="M1.2 2.8 L1.7 9.8 Q1.8 10.4 2.4 10.4 H6.4 Q7 10.4 7.1 9.8 L7.6 2.8" fill="none" stroke="#e98a3c" stroke-width="1.1"/><path d="M3.2 4.2 V9 M4.4 4.2 V9 M5.6 4.2 V9" stroke="#e98a3c" stroke-width="0.65"/></svg>
<div class="t" style="left:120.00px;top:190.65px;font-size:11px;line-height:11px;color:#222;font-weight:normal;transform:scaleX(0.69);">0001</div>
<div class="t" style="left:149.90px;top:190.65px;font-size:11px;line-height:11px;color:#222;font-weight:normal;transform:scaleX(0.69);">2022</div>
<div class="t" style="left:179.30px;top:190.65px;font-size:11px;line-height:11px;color:#222;font-weight:normal;transform:scaleX(0.69);">WS</div>
<div class="t" style="left:209.00px;top:190.65px;font-size:11px;line-height:11px;color:#222;font-weight:normal;transform:scaleX(0.69);">永久</div>
<div class="t" style="left:303.50px;top:190.65px;font-size:11px;line-height:11px;color:#222;font-weight:normal;transform:scaleX(0.69);">0005</div>
<div class="r" style="left:539.00px;top:184.90px;width:13.00px;height:22.7px;overflow:hidden">
<div class="t" style="left:1.4px;top:5.35px;font-size:11px;line-height:11px;color:#222;transform:scaleX(0.69)">测试</div>
</div>
<div class="r" style="left:0.00px;top:207.60px;width:552.00px;height:22.70px;background:#ebe283;"></div>
<div class="t" style="left:16.50px;top:213.35px;font-size:11px;line-height:11px;color:#222;font-weight:normal;transform:scaleX(0.69);transform-origin:50% 50%;width:0;display:flex;justify-content:center">9</div>
<div class="r" style="left:36.40px;top:212.50px;width:7.80px;height:9.60px;background:#fff;border:1px solid #8a8a8a;border-radius:2px"></div>
<svg class="r" style="left:53.40px;top:214.60px" width="8.6" height="10.8" viewBox="0 0 8.6 10.8" preserveAspectRatio="none"><rect x="0.55" y="1.9" width="7.5" height="8.35" rx="0.9" fill="none" stroke="#3d8fcc" stroke-width="1.1"/><rect x="0.55" y="1.9" width="7.5" height="1.9" fill="#3d8fcc"/><rect x="1.6" y="0.2" width="1.5" height="2.8" rx="0.5" fill="#3d8fcc"/><rect x="5.5" y="0.2" width="1.5" height="2.8" rx="0.5" fill="#3d8fcc"/><path d="M2.4 6.6 L3.8 8 L6.2 5.2" fill="none" stroke="#3d8fcc" stroke-width="1"/></svg>
<svg class="r" style="left:67.80px;top:213.20px" width="9" height="11" viewBox="0 0 9 11" preserveAspectRatio="none"><path d="M0 11 L0.3 8.1 L6.6 0.5 L8.9 2.4 L2.6 10 Z" fill="#3d83cf"/><path d="M5.8 1.5 L8.1 3.4" stroke="#a9c9ea" stroke-width="0.6"/></svg>
<svg class="r" style="left:83.00px;top:213.30px" width="8.8" height="10.8" viewBox="0 0 8.8 10.8" preserveAspectRatio="none"><path d="M3 1.6 V0.9 Q3 0.4 3.5 0.4 H5.3 Q5.8 0.4 5.8 0.9 V1.6" fill="none" stroke="#e98a3c" stroke-width="1"/><rect x="0.1" y="1.5" width="8.6" height="1.3" rx="0.4" fill="#e98a3c"/><path d="M1.2 2.8 L1.7 9.8 Q1.8 10.4 2.4 10.4 H6.4 Q7 10.4 7.1 9.8 L7.6 2.8" fill="none" stroke="#e98a3c" stroke-width="1.1"/><path d="M3.2 4.2 V9 M4.4 4.2 V9 M5.6 4.2 V9" stroke="#e98a3c" stroke-width="0.65"/></svg>
<div class="t" style="left:120.00px;top:213.35px;font-size:11px;line-height:11px;color:#222;font-weight:normal;transform:scaleX(0.69);">JC306</div>
<div class="t" style="left:149.90px;top:213.35px;font-size:11px;line-height:11px;color:#222;font-weight:normal;transform:scaleX(0.69);">2022</div>
<div class="t" style="left:179.30px;top:213.35px;font-size:11px;line-height:11px;color:#222;font-weight:normal;transform:scaleX(0.69);">WS</div>
<div class="t" style="left:209.00px;top:213.35px;font-size:11px;line-height:11px;color:#222;font-weight:normal;transform:scaleX(0.69);">永久</div>
<div class="t" style="left:303.50px;top:213.35px;font-size:11px;line-height:11px;color:#222;font-weight:normal;transform:scaleX(0.69);">0005</div>
<div class="r" style="left:539.00px;top:207.60px;width:13.00px;height:22.7px;overflow:hidden">
<div class="t" style="left:1.4px;top:5.35px;font-size:11px;line-height:11px;color:#222;transform:scaleX(0.69)">测试</div>
</div>
<div class="r" style="left:0.00px;top:230.30px;width:552.00px;height:22.70px;background:#ffffff;"></div>
<div class="t" style="left:16.50px;top:236.05px;font-size:11px;line-height:11px;color:#222;font-weight:normal;transform:scaleX(0.69);transform-origin:50% 50%;width:0;display:flex;justify-content:center">10</div>
<div class="r" style="left:36.40px;top:235.20px;width:7.80px;height:9.60px;background:#fff;border:1px solid #8a8a8a;border-radius:2px"></div>
<svg class="r" style="left:53.40px;top:237.30px" width="8.6" height="10.8" viewBox="0 0 8.6 10.8" preserveAspectRatio="none"><rect x="0.55" y="1.9" width="7.5" height="8.35" rx="0.9" fill="none" stroke="#3d8edb" stroke-width="1.1"/><rect x="0.55" y="1.9" width="7.5" height="1.9" fill="#3d8edb"/><rect x="1.6" y="0.2" width="1.5" height="2.8" rx="0.5" fill="#3d8edb"/><rect x="5.5" y="0.2" width="1.5" height="2.8" rx="0.5" fill="#3d8edb"/><path d="M2.4 6.6 L3.8 8 L6.2 5.2" fill="none" stroke="#3d8edb" stroke-width="1"/></svg>
<svg class="r" style="left:67.80px;top:235.90px" width="9" height="11" viewBox="0 0 9 11" preserveAspectRatio="none"><path d="M0 11 L0.3 8.1 L6.6 0.5 L8.9 2.4 L2.6 10 Z" fill="#3d83cf"/><path d="M5.8 1.5 L8.1 3.4" stroke="#a9c9ea" stroke-width="0.6"/></svg>
<svg class="r" style="left:83.00px;top:236.00px" width="8.8" height="10.8" viewBox="0 0 8.8 10.8" preserveAspectRatio="none"><path d="M3 1.6 V0.9 Q3 0.4 3.5 0.4 H5.3 Q5.8 0.4 5.8 0.9 V1.6" fill="none" stroke="#e8766b" stroke-width="1"/><rect x="0.1" y="1.5" width="8.6" height="1.3" rx="0.4" fill="#e8766b"/><path d="M1.2 2.8 L1.7 9.8 Q1.8 10.4 2.4 10.4 H6.4 Q7 10.4 7.1 9.8 L7.6 2.8" fill="none" stroke="#e8766b" stroke-width="1.1"/><path d="M3.2 4.2 V9 M4.4 4.2 V9 M5.6 4.2 V9" stroke="#e8766b" stroke-width="0.65"/></svg>
<div class="t" style="left:120.00px;top:236.05px;font-size:11px;line-height:11px;color:#222;font-weight:normal;transform:scaleX(0.69);">0001</div>
<div class="t" style="left:149.90px;top:236.05px;font-size:11px;line-height:11px;color:#222;font-weight:normal;transform:scaleX(0.69);">2023</div>
<div class="t" style="left:179.30px;top:236.05px;font-size:11px;line-height:11px;color:#222;font-weight:normal;transform:scaleX(0.69);">WS</div>
<div class="t" style="left:209.00px;top:236.05px;font-size:11px;line-height:11px;color:#222;font-weight:normal;transform:scaleX(0.69);">永久</div>
<div class="t" style="left:303.50px;top:236.05px;font-size:11px;line-height:11px;color:#222;font-weight:normal;transform:scaleX(0.69);">0001</div>
<div class="r" style="left:539.00px;top:230.30px;width:13.00px;height:22.7px;overflow:hidden">
<div class="t" style="left:1.4px;top:5.35px;font-size:11px;line-height:11px;color:#222;transform:scaleX(0.69)">111</div>
</div>
<div class="r" style="left:0.00px;top:253.00px;width:552.00px;height:22.70px;background:#ffffff;"></div>
<div class="t" style="left:16.50px;top:258.75px;font-size:11px;line-height:11px;color:#222;font-weight:normal;transform:scaleX(0.69);transform-origin:50% 50%;width:0;display:flex;justify-content:center">11</div>
<div class="r" style="left:36.40px;top:257.90px;width:7.80px;height:9.60px;background:#fff;border:1px solid #8a8a8a;border-radius:2px"></div>
<svg class="r" style="left:53.40px;top:260.00px" width="8.6" height="10.8" viewBox="0 0 8.6 10.8" preserveAspectRatio="none"><rect x="0.55" y="1.9" width="7.5" height="8.35" rx="0.9" fill="none" stroke="#3d8edb" stroke-width="1.1"/><rect x="0.55" y="1.9" width="7.5" height="1.9" fill="#3d8edb"/><rect x="1.6" y="0.2" width="1.5" height="2.8" rx="0.5" fill="#3d8edb"/><rect x="5.5" y="0.2" width="1.5" height="2.8" rx="0.5" fill="#3d8edb"/><path d="M2.4 6.6 L3.8 8 L6.2 5.2" fill="none" stroke="#3d8edb" stroke-width="1"/></svg>
<svg class="r" style="left:67.80px;top:258.60px" width="9" height="11" viewBox="0 0 9 11" preserveAspectRatio="none"><path d="M0 11 L0.3 8.1 L6.6 0.5 L8.9 2.4 L2.6 10 Z" fill="#3d83cf"/><path d="M5.8 1.5 L8.1 3.4" stroke="#a9c9ea" stroke-width="0.6"/></svg>
<svg class="r" style="left:83.00px;top:258.70px" width="8.8" height="10.8" viewBox="0 0 8.8 10.8" preserveAspectRatio="none"><path d="M3 1.6 V0.9 Q3 0.4 3.5 0.4 H5.3 Q5.8 0.4 5.8 0.9 V1.6" fill="none" stroke="#e8766b" stroke-width="1"/><rect x="0.1" y="1.5" width="8.6" height="1.3" rx="0.4" fill="#e8766b"/><path d="M1.2 2.8 L1.7 9.8 Q1.8 10.4 2.4 10.4 H6.4 Q7 10.4 7.1 9.8 L7.6 2.8" fill="none" stroke="#e8766b" stroke-width="1.1"/><path d="M3.2 4.2 V9 M4.4 4.2 V9 M5.6 4.2 V9" stroke="#e8766b" stroke-width="0.65"/></svg>
<div class="t" style="left:120.00px;top:258.75px;font-size:11px;line-height:11px;color:#222;font-weight:normal;transform:scaleX(0.69);">JC306</div>
<div class="t" style="left:149.90px;top:258.75px;font-size:11px;line-height:11px;color:#222;font-weight:normal;transform:scaleX(0.69);">2023</div>
<div class="t" style="left:179.30px;top:258.75px;font-size:11px;line-height:11px;color:#222;font-weight:normal;transform:scaleX(0.69);">WS</div>
<div class="t" style="left:209.00px;top:258.75px;font-size:11px;line-height:11px;color:#222;font-weight:normal;transform:scaleX(0.69);">30年</div>
<div class="t" style="left:303.50px;top:258.75px;font-size:11px;line-height:11px;color:#222;font-weight:normal;transform:scaleX(0.69);">0001</div>
<div class="r" style="left:539.00px;top:253.00px;width:13.00px;height:22.7px;overflow:hidden">
<div class="t" style="left:1.4px;top:5.35px;font-size:11px;line-height:11px;color:#222;transform:scaleX(0.69)">111</div>
</div>
<div class="r" style="left:0.00px;top:275.70px;width:552.00px;height:22.70px;background:#ffffff;"></div>
<div class="t" style="left:16.50px;top:281.45px;font-size:11px;line-height:11px;color:#222;font-weight:normal;transform:scaleX(0.69);transform-origin:50% 50%;width:0;display:flex;justify-content:center">12</div>
<div class="r" style="left:36.40px;top:280.60px;width:7.80px;height:9.60px;background:#fff;border:1px solid #8a8a8a;border-radius:2px"></div>
<svg class="r" style="left:53.40px;top:282.70px" width="8.6" height="10.8" viewBox="0 0 8.6 10.8" preserveAspectRatio="none"><rect x="0.55" y="1.9" width="7.5" height="8.35" rx="0.9" fill="none" stroke="#3d8edb" stroke-width="1.1"/><rect x="0.55" y="1.9" width="7.5" height="1.9" fill="#3d8edb"/><rect x="1.6" y="0.2" width="1.5" height="2.8" rx="0.5" fill="#3d8edb"/><rect x="5.5" y="0.2" width="1.5" height="2.8" rx="0.5" fill="#3d8edb"/><path d="M2.4 6.6 L3.8 8 L6.2 5.2" fill="none" stroke="#3d8edb" stroke-width="1"/></svg>
<svg class="r" style="left:67.80px;top:281.30px" width="9" height="11" viewBox="0 0 9 11" preserveAspectRatio="none"><path d="M0 11 L0.3 8.1 L6.6 0.5 L8.9 2.4 L2.6 10 Z" fill="#3d83cf"/><path d="M5.8 1.5 L8.1 3.4" stroke="#a9c9ea" stroke-width="0.6"/></svg>
<svg class="r" style="left:83.00px;top:281.40px" width="8.8" height="10.8" viewBox="0 0 8.8 10.8" preserveAspectRatio="none"><path d="M3 1.6 V0.9 Q3 0.4 3.5 0.4 H5.3 Q5.8 0.4 5.8 0.9 V1.6" fill="none" stroke="#e8766b" stroke-width="1"/><rect x="0.1" y="1.5" width="8.6" height="1.3" rx="0.4" fill="#e8766b"/><path d="M1.2 2.8 L1.7 9.8 Q1.8 10.4 2.4 10.4 H6.4 Q7 10.4 7.1 9.8 L7.6 2.8" fill="none" stroke="#e8766b" stroke-width="1.1"/><path d="M3.2 4.2 V9 M4.4 4.2 V9 M5.6 4.2 V9" stroke="#e8766b" stroke-width="0.65"/></svg>
<div class="t" style="left:120.00px;top:281.45px;font-size:11px;line-height:11px;color:#222;font-weight:normal;transform:scaleX(0.69);">JC306</div>
<div class="t" style="left:149.90px;top:281.45px;font-size:11px;line-height:11px;color:#222;font-weight:normal;transform:scaleX(0.69);">2023</div>
<div class="t" style="left:179.30px;top:281.45px;font-size:11px;line-height:11px;color:#222;font-weight:normal;transform:scaleX(0.69);">WS</div>
<div class="t" style="left:209.00px;top:281.45px;font-size:11px;line-height:11px;color:#222;font-weight:normal;transform:scaleX(0.69);">30年</div>
<div class="t" style="left:303.50px;top:281.45px;font-size:11px;line-height:11px;color:#222;font-weight:normal;transform:scaleX(0.69);">0001</div>
<div class="r" style="left:539.00px;top:275.70px;width:13.00px;height:22.7px;overflow:hidden">
<div class="t" style="left:1.4px;top:5.35px;font-size:11px;line-height:11px;color:#222;transform:scaleX(0.69)">111</div>
</div>
<div class="r" style="left:0.00px;top:298.40px;width:552.00px;height:22.70px;background:#ffffff;"></div>
<div class="t" style="left:16.50px;top:304.15px;font-size:11px;line-height:11px;color:#222;font-weight:normal;transform:scaleX(0.69);transform-origin:50% 50%;width:0;display:flex;justify-content:center">13</div>
<div class="r" style="left:36.40px;top:303.30px;width:7.80px;height:9.60px;background:#fff;border:1px solid #8a8a8a;border-radius:2px"></div>
<svg class="r" style="left:53.40px;top:305.40px" width="8.6" height="10.8" viewBox="0 0 8.6 10.8" preserveAspectRatio="none"><rect x="0.55" y="1.9" width="7.5" height="8.35" rx="0.9" fill="none" stroke="#3d8edb" stroke-width="1.1"/><rect x="0.55" y="1.9" width="7.5" height="1.9" fill="#3d8edb"/><rect x="1.6" y="0.2" width="1.5" height="2.8" rx="0.5" fill="#3d8edb"/><rect x="5.5" y="0.2" width="1.5" height="2.8" rx="0.5" fill="#3d8edb"/><path d="M2.4 6.6 L3.8 8 L6.2 5.2" fill="none" stroke="#3d8edb" stroke-width="1"/></svg>
<svg class="r" style="left:67.80px;top:304.00px" width="9" height="11" viewBox="0 0 9 11" preserveAspectRatio="none"><path d="M0 11 L0.3 8.1 L6.6 0.5 L8.9 2.4 L2.6 10 Z" fill="#3d83cf"/><path d="M5.8 1.5 L8.1 3.4" stroke="#a9c9ea" stroke-width="0.6"/></svg>
<svg class="r" style="left:83.00px;top:304.10px" width="8.8" height="10.8" viewBox="0 0 8.8 10.8" preserveAspectRatio="none"><path d="M3 1.6 V0.9 Q3 0.4 3.5 0.4 H5.3 Q5.8 0.4 5.8 0.9 V1.6" fill="none" stroke="#e8766b" stroke-width="1"/><rect x="0.1" y="1.5" width="8.6" height="1.3" rx="0.4" fill="#e8766b"/><path d="M1.2 2.8 L1.7 9.8 Q1.8 10.4 2.4 10.4 H6.4 Q7 10.4 7.1 9.8 L7.6 2.8" fill="none" stroke="#e8766b" stroke-width="1.1"/><path d="M3.2 4.2 V9 M4.4 4.2 V9 M5.6 4.2 V9" stroke="#e8766b" stroke-width="0.65"/></svg>
<div class="t" style="left:120.00px;top:304.15px;font-size:11px;line-height:11px;color:#222;font-weight:normal;transform:scaleX(0.69);">JC306</div>
<div class="t" style="left:149.90px;top:304.15px;font-size:11px;line-height:11px;color:#222;font-weight:normal;transform:scaleX(0.69);">2023</div>
<div class="t" style="left:179.30px;top:304.15px;font-size:11px;line-height:11px;color:#222;font-weight:normal;transform:scaleX(0.69);">WS</div>
<div class="t" style="left:209.00px;top:304.15px;font-size:11px;line-height:11px;color:#222;font-weight:normal;transform:scaleX(0.69);">30年</div>
<div class="t" style="left:303.50px;top:304.15px;font-size:11px;line-height:11px;color:#222;font-weight:normal;transform:scaleX(0.69);">0001</div>
<div class="r" style="left:539.00px;top:298.40px;width:13.00px;height:22.7px;overflow:hidden">
<div class="t" style="left:1.4px;top:5.35px;font-size:11px;line-height:11px;color:#222;transform:scaleX(0.69)">111</div>
</div>
<div class="r" style="left:0.00px;top:321.10px;width:552.00px;height:22.70px;background:#ebe283;"></div>
<div class="t" style="left:16.50px;top:326.85px;font-size:11px;line-height:11px;color:#222;font-weight:normal;transform:scaleX(0.69);transform-origin:50% 50%;width:0;display:flex;justify-content:center">14</div>
<div class="r" style="left:36.40px;top:326.00px;width:7.80px;height:9.60px;background:#fff;border:1px solid #8a8a8a;border-radius:2px"></div>
<svg class="r" style="left:53.40px;top:328.10px" width="8.6" height="10.8" viewBox="0 0 8.6 10.8" preserveAspectRatio="none"><rect x="0.55" y="1.9" width="7.5" height="8.35" rx="0.9" fill="none" stroke="#3d8fcc" stroke-width="1.1"/><rect x="0.55" y="1.9" width="7.5" height="1.9" fill="#3d8fcc"/><rect x="1.6" y="0.2" width="1.5" height="2.8" rx="0.5" fill="#3d8fcc"/><rect x="5.5" y="0.2" width="1.5" height="2.8" rx="0.5" fill="#3d8fcc"/><path d="M2.4 6.6 L3.8 8 L6.2 5.2" fill="none" stroke="#3d8fcc" stroke-width="1"/></svg>
<svg class="r" style="left:67.80px;top:326.70px" width="9" height="11" viewBox="0 0 9 11" preserveAspectRatio="none"><path d="M0 11 L0.3 8.1 L6.6 0.5 L8.9 2.4 L2.6 10 Z" fill="#3d83cf"/><path d="M5.8 1.5 L8.1 3.4" stroke="#a9c9ea" stroke-width="0.6"/></svg>
<svg class="r" style="left:83.00px;top:326.80px" width="8.8" height="10.8" viewBox="0 0 8.8 10.8" preserveAspectRatio="none"><path d="M3 1.6 V0.9 Q3 0.4 3.5 0.4 H5.3 Q5.8 0.4 5.8 0.9 V1.6" fill="none" stroke="#e98a3c" stroke-width="1"/><rect x="0.1" y="1.5" width="8.6" height="1.3" rx="0.4" fill="#e98a3c"/><path d="M1.2 2.8 L1.7 9.8 Q1.8 10.4 2.4 10.4 H6.4 Q7 10.4 7.1 9.8 L7.6 2.8" fill="none" stroke="#e98a3c" stroke-width="1.1"/><path d="M3.2 4.2 V9 M4.4 4.2 V9 M5.6 4.2 V9" stroke="#e98a3c" stroke-width="0.65"/></svg>
<div class="t" style="left:120.00px;top:326.85px;font-size:11px;line-height:11px;color:#222;font-weight:normal;transform:scaleX(0.69);">JC306</div>
<div class="t" style="left:149.90px;top:326.85px;font-size:11px;line-height:11px;color:#222;font-weight:normal;transform:scaleX(0.69);">2023</div>
<div class="t" style="left:179.30px;top:326.85px;font-size:11px;line-height:11px;color:#222;font-weight:normal;transform:scaleX(0.69);">WS</div>
<div class="t" style="left:209.00px;top:326.85px;font-size:11px;line-height:11px;color:#222;font-weight:normal;transform:scaleX(0.69);">30年</div>
<div class="t" style="left:303.50px;top:326.85px;font-size:11px;line-height:11px;color:#222;font-weight:normal;transform:scaleX(0.69);">0001</div>
<div class="r" style="left:539.00px;top:321.10px;width:13.00px;height:22.7px;overflow:hidden">
<div class="t" style="left:1.4px;top:5.35px;font-size:11px;line-height:11px;color:#222;transform:scaleX(0.69)">111</div>
</div>
<div class="r" style="left:0.00px;top:343.80px;width:552.00px;height:22.70px;background:#ffffff;"></div>
<div class="t" style="left:16.50px;top:349.55px;font-size:11px;line-height:11px;color:#222;font-weight:normal;transform:scaleX(0.69);transform-origin:50% 50%;width:0;display:flex;justify-content:center">15</div>
<div class="r" style="left:36.40px;top:348.70px;width:7.80px;height:9.60px;background:#fff;border:1px solid #8a8a8a;border-radius:2px"></div>
<svg class="r" style="left:53.40px;top:350.80px" width="8.6" height="10.8" viewBox="0 0 8.6 10.8" preserveAspectRatio="none"><rect x="0.55" y="1.9" width="7.5" height="8.35" rx="0.9" fill="none" stroke="#3d8edb" stroke-width="1.1"/><rect x="0.55" y="1.9" width="7.5" height="1.9" fill="#3d8edb"/><rect x="1.6" y="0.2" width="1.5" height="2.8" rx="0.5" fill="#3d8edb"/><rect x="5.5" y="0.2" width="1.5" height="2.8" rx="0.5" fill="#3d8edb"/><path d="M2.4 6.6 L3.8 8 L6.2 5.2" fill="none" stroke="#3d8edb" stroke-width="1"/></svg>
<svg class="r" style="left:67.80px;top:349.40px" width="9" height="11" viewBox="0 0 9 11" preserveAspectRatio="none"><path d="M0 11 L0.3 8.1 L6.6 0.5 L8.9 2.4 L2.6 10 Z" fill="#3d83cf"/><path d="M5.8 1.5 L8.1 3.4" stroke="#a9c9ea" stroke-width="0.6"/></svg>
<svg class="r" style="left:83.00px;top:349.50px" width="8.8" height="10.8" viewBox="0 0 8.8 10.8" preserveAspectRatio="none"><path d="M3 1.6 V0.9 Q3 0.4 3.5 0.4 H5.3 Q5.8 0.4 5.8 0.9 V1.6" fill="none" stroke="#e8766b" stroke-width="1"/><rect x="0.1" y="1.5" width="8.6" height="1.3" rx="0.4" fill="#e8766b"/><path d="M1.2 2.8 L1.7 9.8 Q1.8 10.4 2.4 10.4 H6.4 Q7 10.4 7.1 9.8 L7.6 2.8" fill="none" stroke="#e8766b" stroke-width="1.1"/><path d="M3.2 4.2 V9 M4.4 4.2 V9 M5.6 4.2 V9" stroke="#e8766b" stroke-width="0.65"/></svg>
<div class="t" style="left:120.00px;top:349.55px;font-size:11px;line-height:11px;color:#222;font-weight:normal;transform:scaleX(0.69);">JC306</div>
<div class="t" style="left:149.90px;top:349.55px;font-size:11px;line-height:11px;color:#222;font-weight:normal;transform:scaleX(0.69);">2024</div>
<div class="t" style="left:179.30px;top:349.55px;font-size:11px;line-height:11px;color:#222;font-weight:normal;transform:scaleX(0.69);">WS</div>
<div class="t" style="left:209.00px;top:349.55px;font-size:11px;line-height:11px;color:#222;font-weight:normal;transform:scaleX(0.69);">永久</div>
<div class="t" style="left:303.50px;top:349.55px;font-size:11px;line-height:11px;color:#222;font-weight:normal;transform:scaleX(0.69);">0001</div>
<div class="r" style="left:539.00px;top:343.80px;width:13.00px;height:22.7px;overflow:hidden">
<div class="t" style="left:1.4px;top:5.35px;font-size:11px;line-height:11px;color:#222;transform:scaleX(0.69)">202</div>
</div>
<div class="r" style="left:0.00px;top:366.50px;width:552.00px;height:22.70px;background:#ffffff;"></div>
<div class="t" style="left:16.50px;top:372.25px;font-size:11px;line-height:11px;color:#222;font-weight:normal;transform:scaleX(0.69);transform-origin:50% 50%;width:0;display:flex;justify-content:center">16</div>
<div class="r" style="left:36.40px;top:371.40px;width:7.80px;height:9.60px;background:#fff;border:1px solid #8a8a8a;border-radius:2px"></div>
<svg class="r" style="left:53.40px;top:373.50px" width="8.6" height="10.8" viewBox="0 0 8.6 10.8" preserveAspectRatio="none"><rect x="0.55" y="1.9" width="7.5" height="8.35" rx="0.9" fill="none" stroke="#3d8edb" stroke-width="1.1"/><rect x="0.55" y="1.9" width="7.5" height="1.9" fill="#3d8edb"/><rect x="1.6" y="0.2" width="1.5" height="2.8" rx="0.5" fill="#3d8edb"/><rect x="5.5" y="0.2" width="1.5" height="2.8" rx="0.5" fill="#3d8edb"/><path d="M2.4 6.6 L3.8 8 L6.2 5.2" fill="none" stroke="#3d8edb" stroke-width="1"/></svg>
<svg class="r" style="left:67.80px;top:372.10px" width="9" height="11" viewBox="0 0 9 11" preserveAspectRatio="none"><path d="M0 11 L0.3 8.1 L6.6 0.5 L8.9 2.4 L2.6 10 Z" fill="#3d83cf"/><path d="M5.8 1.5 L8.1 3.4" stroke="#a9c9ea" stroke-width="0.6"/></svg>
<svg class="r" style="left:83.00px;top:372.20px" width="8.8" height="10.8" viewBox="0 0 8.8 10.8" preserveAspectRatio="none"><path d="M3 1.6 V0.9 Q3 0.4 3.5 0.4 H5.3 Q5.8 0.4 5.8 0.9 V1.6" fill="none" stroke="#e8766b" stroke-width="1"/><rect x="0.1" y="1.5" width="8.6" height="1.3" rx="0.4" fill="#e8766b"/><path d="M1.2 2.8 L1.7 9.8 Q1.8 10.4 2.4 10.4 H6.4 Q7 10.4 7.1 9.8 L7.6 2.8" fill="none" stroke="#e8766b" stroke-width="1.1"/><path d="M3.2 4.2 V9 M4.4 4.2 V9 M5.6 4.2 V9" stroke="#e8766b" stroke-width="0.65"/></svg>
<div class="t" style="left:120.00px;top:372.25px;font-size:11px;line-height:11px;color:#222;font-weight:normal;transform:scaleX(0.69);">JC306</div>
<div class="t" style="left:149.90px;top:372.25px;font-size:11px;line-height:11px;color:#222;font-weight:normal;transform:scaleX(0.69);">30年</div>
<div class="t" style="left:179.30px;top:372.25px;font-size:11px;line-height:11px;color:#222;font-weight:normal;transform:scaleX(0.69);">KJ·KY</div>
<div class="t" style="left:209.00px;top:372.25px;font-size:11px;line-height:11px;color:#222;font-weight:normal;transform:scaleX(0.69);">永久</div>
<div class="t" style="left:244.10px;top:372.25px;font-size:11px;line-height:11px;color:#222;font-weight:normal;transform:scaleX(0.69);">机关党委</div>
<div class="t" style="left:303.50px;top:372.25px;font-size:11px;line-height:11px;color:#222;font-weight:normal;transform:scaleX(0.69);">0001</div>
<div class="r" style="left:539.00px;top:366.50px;width:13.00px;height:22.7px;overflow:hidden">
<div class="t" style="left:1.4px;top:5.35px;font-size:11px;line-height:11px;color:#222;transform:scaleX(0.69)">aa</div>
</div>
<div class="r" style="left:0.00px;top:25.50px;width:552.00px;height:1.00px;background:rgba(228,228,228,0.85);"></div>
<div class="r" style="left:0.00px;top:48.20px;width:552.00px;height:1.00px;background:rgba(228,228,228,0.85);"></div>
<div class="r" style="left:0.00px;top:70.90px;width:552.00px;height:1.00px;background:rgba(228,228,228,0.85);"></div>
<div class="r" style="left:0.00px;top:93.60px;width:552.00px;height:1.00px;background:rgba(228,228,228,0.85);"></div>
<div class="r" style="left:0.00px;top:116.30px;width:552.00px;height:1.00px;background:rgba(228,228,228,0.85);"></div>
<div class="r" style="left:0.00px;top:139.00px;width:552.00px;height:1.00px;background:rgba(228,228,228,0.85);"></div>
<div class="r" style="left:0.00px;top:161.70px;width:552.00px;height:1.00px;background:rgba(228,228,228,0.85);"></div>
<div class="r" style="left:0.00px;top:184.40px;width:552.00px;height:1.00px;background:rgba(228,228,228,0.85);"></div>
<div class="r" style="left:0.00px;top:207.10px;width:552.00px;height:1.00px;background:rgba(228,228,228,0.85);"></div>
<div class="r" style="left:0.00px;top:229.80px;width:552.00px;height:1.00px;background:rgba(228,228,228,0.85);"></div>
<div class="r" style="left:0.00px;top:252.50px;width:552.00px;height:1.00px;background:rgba(228,228,228,0.85);"></div>
<div class="r" style="left:0.00px;top:275.20px;width:552.00px;height:1.00px;background:rgba(228,228,228,0.85);"></div>
<div class="r" style="left:0.00px;top:297.90px;width:552.00px;height:1.00px;background:rgba(228,228,228,0.85);"></div>
<div class="r" style="left:0.00px;top:320.60px;width:552.00px;height:1.00px;background:rgba(228,228,228,0.85);"></div>
<div class="r" style="left:0.00px;top:343.30px;width:552.00px;height:1.00px;background:rgba(228,228,228,0.85);"></div>
<div class="r" style="left:0.00px;top:366.00px;width:552.00px;height:1.00px;background:rgba(228,228,228,0.85);"></div>
<div class="r" style="left:0.00px;top:388.70px;width:552.00px;height:1.00px;background:rgba(228,228,228,0.85);"></div>
<div class="r" style="left:32.00px;top:0.00px;width:1.00px;height:384.00px;background:rgba(225,225,225,0.6);"></div>
<div class="r" style="left:47.00px;top:0.00px;width:1.00px;height:384.00px;background:rgba(225,225,225,0.6);"></div>
<div class="r" style="left:117.80px;top:0.00px;width:1.00px;height:384.00px;background:rgba(225,225,225,0.6);"></div>
<div class="r" style="left:147.70px;top:0.00px;width:1.00px;height:384.00px;background:rgba(225,225,225,0.6);"></div>
<div class="r" style="left:177.20px;top:0.00px;width:1.00px;height:384.00px;background:rgba(225,225,225,0.6);"></div>
<div class="r" style="left:206.90px;top:0.00px;width:1.00px;height:384.00px;background:rgba(225,225,225,0.6);"></div>
<div class="r" style="left:242.00px;top:0.00px;width:1.00px;height:384.00px;background:rgba(225,225,225,0.6);"></div>
<div class="r" style="left:301.25px;top:0.00px;width:1.00px;height:384.00px;background:rgba(225,225,225,0.6);"></div>
<div class="r" style="left:330.50px;top:0.00px;width:1.00px;height:384.00px;background:rgba(225,225,225,0.6);"></div>
<div class="r" style="left:448.75px;top:0.00px;width:1.00px;height:384.00px;background:rgba(225,225,225,0.6);"></div>
<div class="r" style="left:538.00px;top:0.00px;width:1.00px;height:384.00px;background:rgba(225,225,225,0.6);"></div>
</div>
<div class="r" style="left:237px;top:495px;width:560px;height:10px;background:#ffffff;"></div>
<svg class="r" style="left:239.5px;top:496.5px;" width="4.5" height="7" viewBox="0 0 4.5 7" preserveAspectRatio="none"><path d="M4.5 0 L0 3.5 L4.5 7 Z" fill="#777"/></svg>
<div class="r" style="left:246px;top:496.8px;width:199.6px;height:6.8px;background:#8a8a8a;border-radius:3.4px"></div>
<svg class="r" style="left:782px;top:497px;" width="4.5" height="7" viewBox="0 0 4.5 7" preserveAspectRatio="none"><path d="M0 0 L4.5 3.5 L0 7 Z" fill="#777"/></svg>
<div class="r" style="left:237px;top:505px;width:560px;height:5px;background:#ffffff;"></div>
<div class="r" style="left:286px;top:505.5px;width:42px;height:5px;background:#fff;border:1px solid #e0e0e0;border-bottom:none"></div>
<div class="r" style="left:480px;top:505.5px;width:21px;height:5px;background:#fff;border:1px solid #e0e0e0;border-bottom:none"></div>
<div class="r" style="left:576px;top:505.5px;width:28px;height:5px;background:#fff;border:1px solid #e0e0e0;border-bottom:none"></div>
<div class="r" style="left:789px;top:137px;width:8px;height:358px;background:#ffffff;"></div>
<svg class="r" style="left:790.6px;top:141px;" width="4.8" height="4" viewBox="0 0 4.8 4" preserveAspectRatio="none"><path d="M0 4 L2.4 0 L4.8 4 Z" fill="#777"/></svg>
<div class="r" style="left:790.6px;top:150px;width:4.8px;height:174.7px;background:#8a8a8a;border-radius:2.4px"></div>
<svg class="r" style="left:790.5px;top:487px;" width="4.8" height="4.8" viewBox="0 0 4.8 4.8" preserveAspectRatio="none"><path d="M0 0 L4.8 0 L2.4 4.8 Z" fill="#777"/></svg>
<svg class="r" style="left:714.5px;top:467px;" width="20.2" height="25.6" viewBox="0 0 20.2 25.6" preserveAspectRatio="none"><rect x="0" y="0" width="20.2" height="25.6" rx="2.5" fill="#f3b5ba"/><g stroke="#fff" stroke-width="1.1" fill="none"><path d="M2.2 3 V22.6"/><path d="M4.2 4.2 H9.4 M5.2 8 H8.6 V17.6 H5.2 Z M5.2 12.6 H8.6 M3.8 21 H9.8"/><path d="M11.4 3.6 L12.6 4.8 M11.2 7.6 H12.8 V11.6 M14 3.4 H18.6 M14.4 6.4 H18.2 V10.8 H14.4 Z M16.3 3.4 V11.6"/><path d="M12.4 14 L11.4 18 M12 16 V23 M14 14.6 H18.4 M14 17 H18.4 M14.2 19.4 H18.2 V22.8 H14.2 Z"/></g></svg>
<div class="t" style="left:736px;top:468.5px;font-size:14px;line-height:16px;color:rgba(85,85,85,0.85);font-family:'Liberation Serif',serif;transform:scaleX(0.74)">恒诚信集团</div>
<div class="t" style="left:736px;top:484.8px;font-size:8.5px;line-height:8px;color:rgba(110,110,110,0.75);transform:scaleX(0.72)">Hengchengxin Group</div>
</body></html>
